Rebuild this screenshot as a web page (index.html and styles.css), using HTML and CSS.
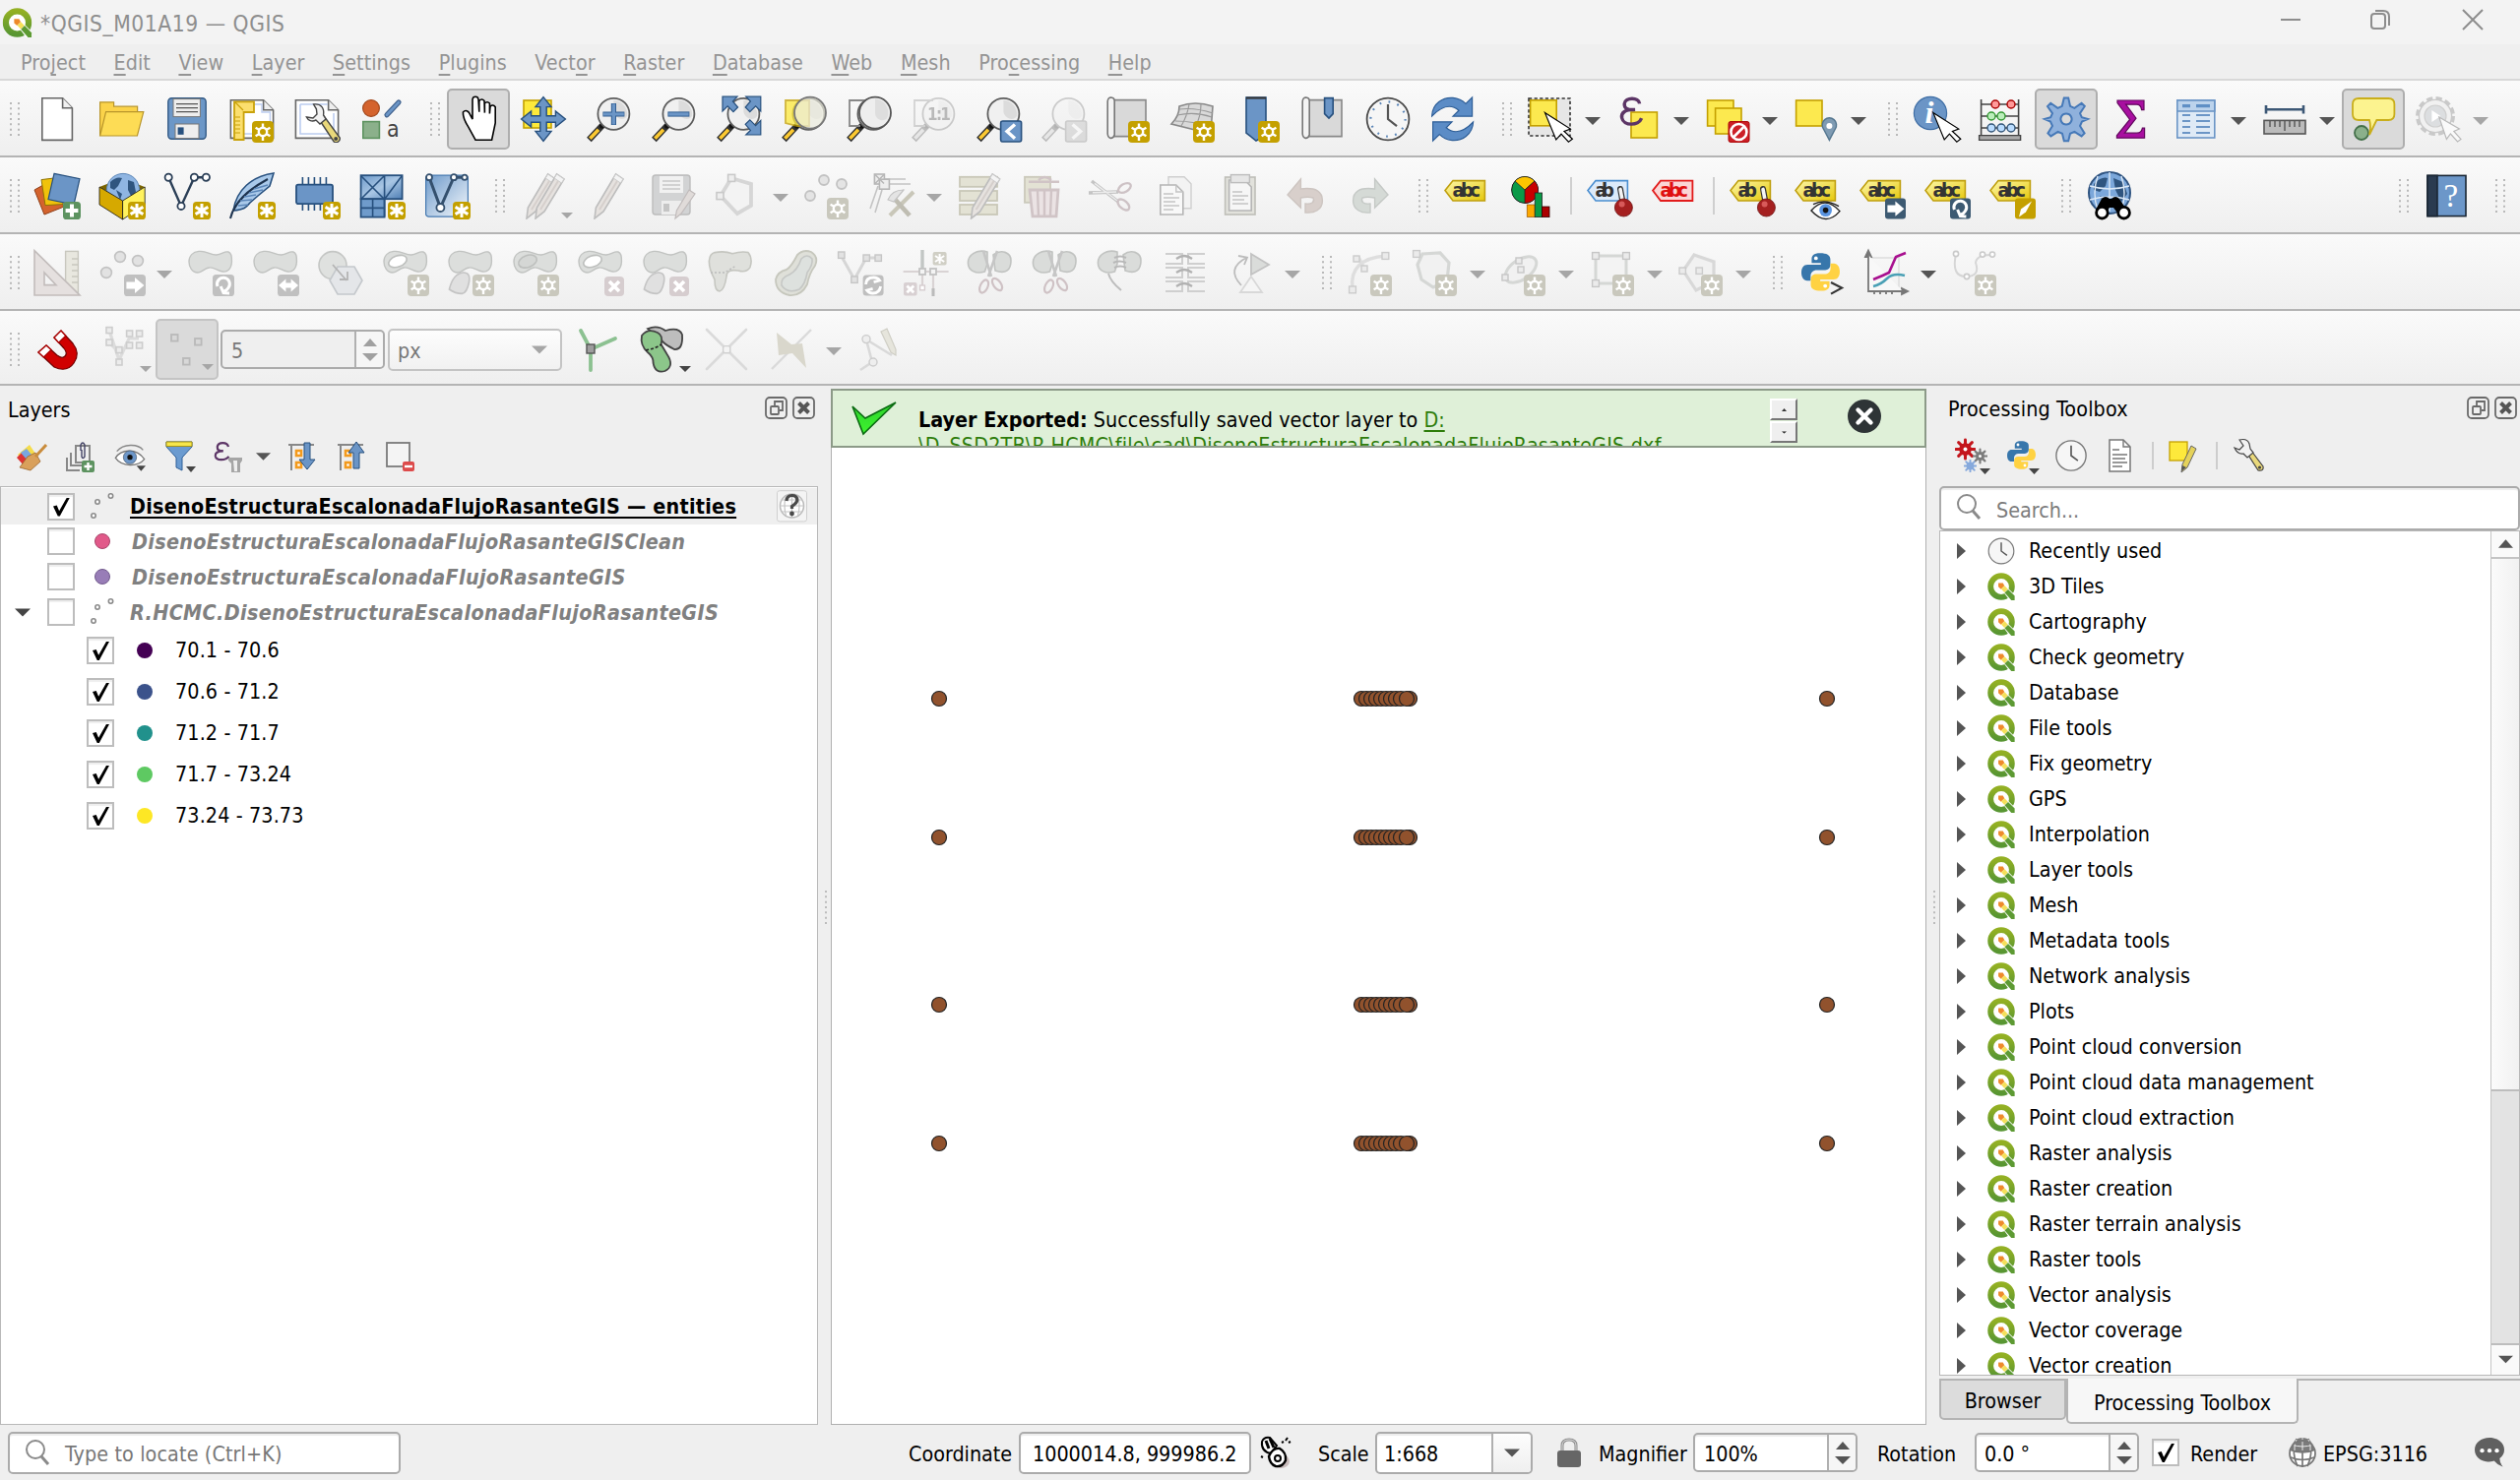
FILE: index.html
```html
<!DOCTYPE html>
<html lang="en">
<head>
<meta charset="utf-8">
<title>*QGIS_M01A19 — QGIS</title>
<link rel="stylesheet" href="styles.css">
</head>
<body>
<svg class="defs" width="0" height="0">
<defs>
<linearGradient id="gy" x1="0" y1="0" x2="1" y2="1"><stop offset="0" stop-color="#fdf7a8"/><stop offset="1" stop-color="#e6c80c"/></linearGradient>
<linearGradient id="gb" x1="0" y1="0" x2="1" y2="1"><stop offset="0" stop-color="#6f9bcb"/><stop offset=".5" stop-color="#a9c6e4"/><stop offset="1" stop-color="#4f7fb5"/></linearGradient>
<linearGradient id="gv" x1="0" y1="0" x2="1" y2="1"><stop offset="0" stop-color="#6f9bcb"/><stop offset="1" stop-color="#f4f8fc"/></linearGradient>
<linearGradient id="gq" x1="0" y1="0" x2="0" y2="1"><stop offset="0" stop-color="#93b023"/><stop offset="1" stop-color="#589632"/></linearGradient>
<linearGradient id="gk" x1="0" y1="0" x2="0" y2="1"><stop offset="0" stop-color="#2fd02f"/><stop offset="1" stop-color="#3df52d"/></linearGradient>
</defs>
<symbol id="handle" viewBox="0 0 10 34"><path d="M1 0v34M9 0v34" stroke="#b9b9b9" stroke-width="2" stroke-dasharray="2 3.33"/></symbol>
<symbol id="dn" viewBox="0 0 16 8"><path d="M0 0h16l-8 8z" fill="currentColor"/></symbol>
<symbol id="q" viewBox="0 0 24 24"><circle cx="12" cy="12" r="9.300" fill="#fff" stroke="url(#gq)" stroke-width="5"/><path d="M11.500 13.500l3-3.500L24.500 20v4.500h-5z" fill="#fff"/><path d="M9.500 9h4l1.300 2.300-3 3-2.300-2z" fill="#ee8a2b"/><path d="M12 14.200l3-2.800 2.800 3-3 2.800z" fill="#f5e05a"/><path d="M15 17.300l3-2.800 5.700 5.700V24h-2.900z" fill="#5d9a33"/></symbol>
<symbol id="star" viewBox="0 0 24 24"><rect x="12" y="13" width="11" height="11" rx="2" fill="#c4a000"/><circle cx="17.500" cy="18.500" r="2.100" fill="none" stroke="#fff" stroke-width="1.200"/><path d="M17.500 14.300v2.500M17.500 20.500v2.500M13.800 16.400l2.200 1.200M21.200 16.400l-2.200 1.200M13.800 20.600l2.200-1.200M21.200 20.600l-2.200-1.200" stroke="#fff" stroke-width="1.200"/></symbol>
<symbol id="star0" viewBox="0 0 24 24"><rect x="12" y="13" width="11" height="11" rx="2" fill="#c9c8bd"/><circle cx="17.500" cy="18.500" r="2.100" fill="none" stroke="#fff" stroke-width="1.200"/><path d="M17.500 14.300v2.500M17.500 20.500v2.500M13.800 16.400l2.200 1.200M21.200 16.400l-2.200 1.200M13.800 20.600l2.200-1.200M21.200 20.600l-2.200-1.200" stroke="#fff" stroke-width="1.200"/></symbol>
<symbol id="ast" viewBox="0 0 24 24"><rect x="15" y="15" width="9" height="9" rx="1.800" fill="#c4a000"/><path d="M19.500 16v7M16.300 17.700l6.400 3.600M22.700 17.700l-6.400 3.600" stroke="#fff" stroke-width="1.500"/></symbol>
<symbol id="cross0" viewBox="0 0 24 24"><rect x="14" y="14" width="10" height="10" rx="2" fill="#d6cdcf"/><path d="M16.500 16.500l5 5M21.500 16.500l-5 5" stroke="#fff" stroke-width="1.800"/></symbol>
<symbol id="blob0" viewBox="0 0 24 24"><path d="M6 1.200C10 .8 12 3.200 15 3 18 2.500 19 1 21 1.500 22.600 2 22.800 4 22.700 6.500c-.2 4-2.500 5.300-4.500 5-3-.3-4.500-2.500-7-2-2.500.3-3.500 2.500-5.700 2.500C2.500 12 1 9 1 6.500 1 3.500 3 1.500 6 1.200z" fill="#dcdedc" stroke="#c1c3c1" stroke-width=".7"/></symbol>
<symbol id="mag" viewBox="0 0 24 24"><path d="M9 15.200L2.200 22.500" stroke="#333" stroke-width="3.200"/><path d="M7 17.400l-4.300 4.500" stroke="#fcc931" stroke-width="1.800"/><circle cx="8.800" cy="15.500" r="1.300" fill="#111"/><circle cx="14.700" cy="9.400" r="8" fill="#f0f0f0" stroke="#5d5d5d" stroke-width=".9"/><path d="M14.700 2.500a7 7 0 0 1 6.800 8c-2 3-6 1-6.800-2z" fill="#dcdcdc"/></symbol>
<symbol id="page" viewBox="0 0 24 24"><path d="M1.200 2.400h16.600l5 5v14.300H1.200z" fill="#fff" stroke="#666" stroke-width=".8"/><path d="M17.800 2.400v5h5" fill="#eee" stroke="#666" stroke-width=".8"/></symbol>
<symbol id="tag" viewBox="0 0 24 24"><path d="M1 9.300L5 4.300h16.200v10.200H5z" fill="url(#gy)" stroke="#c0a010" stroke-width=".8"/></symbol>
<symbol id="arrowcur" viewBox="0 0 24 24"><path d="M9.200 8.700L22.200 17l-3.200 1.200 4.200 3.900-2 1.500-3.700-4-2.600 2.900z" fill="#fff" stroke="#000" stroke-width=".6"/></symbol>
<symbol id="gear" viewBox="0 0 24 24"><path d="M12 1v22M1 12h22M4.200 4.200l15.600 15.600M19.800 4.200L4.200 19.800" stroke="currentColor" stroke-width="3.400" stroke-linecap="round"/><circle cx="12" cy="12" r="7.200" fill="currentColor"/></symbol>
<symbol id="clock" viewBox="0 0 24 24"><ellipse cx="12" cy="12" rx="11" ry="11" fill="#f6f6f6" stroke="#777" stroke-width="1"/><path d="M12 4.500V12l5 3.700" fill="none" stroke="#555" stroke-width="1.200"/></symbol>
<symbol id="py" viewBox="0 0 24 24"><path d="M11.800 1c-4 0-5 1.500-5 3.500v2.200h5.400v1H4.400C2 7.700.8 9.700.8 12.300s1.200 4.700 3.400 4.700h2v-2.800c0-2 1.500-3.400 3.500-3.400h5c1.700 0 3-1.300 3-3V4.500C17.700 2.200 15.500 1 11.800 1z" fill="#3776ab"/><path d="M12.200 23c4 0 5-1.500 5-3.500v-2.200h-5.400v-1h7.800c2.400 0 3.600-2 3.600-4.600S22 7 19.800 7h-2v2.800c0 2-1.500 3.400-3.500 3.400h-5c-1.700 0-3 1.300-3 3v3.300C6.300 21.800 8.500 23 12.200 23z" fill="#ffd242"/><circle cx="9.300" cy="3.900" r="1.100" fill="#fff"/><circle cx="14.700" cy="20.100" r="1.100" fill="#fff"/></symbol>
<symbol id="wrench" viewBox="0 0 24 24"><path d="M13.300 12.500l2.300-2 8 11c.3 1.700-1.500 3-3 2z" fill="#e9d87a" stroke="#444" stroke-width=".7"/><path d="M10.300 4.500c4-.4 5.500 2 5 5.500l1.200 2-3 2.500-2-2c-2 1-4 .3-4.800-1.500l3.300.5 2-2-.3-2.600z" fill="#f2f2f2" stroke="#444" stroke-width=".7"/><circle cx="21.600" cy="22" r="1" fill="#444"/></symbol>
<symbol id="eye" viewBox="0 0 24 24"><path d="M1 13C5 6.500 17 5 23 14 18 20 6 20 1 13z" fill="#fff" stroke="#777" stroke-width="1"/><circle cx="12" cy="12.500" r="5" fill="#6d97c9" stroke="#456" stroke-width=".5"/><circle cx="12" cy="12.500" r="2" fill="#111"/><path d="M2 8C7 2 18 2 22 7" fill="none" stroke="#888" stroke-width="1"/></symbol>
<symbol id="up" viewBox="0 0 14 8"><path d="M0 8h14L7 0z" fill="currentColor"/></symbol>
<symbol id="scis" viewBox="0 0 24 24"><path d="M15.500 1L11 14M8.500 1l4 13" stroke="#c6c6c6" stroke-width="1.300"/><ellipse cx="8.800" cy="19" rx="1.900" ry="3.500" transform="rotate(25 8.800 19)" fill="none" stroke="#cfc2c5" stroke-width="1.100"/><ellipse cx="15.500" cy="18" rx="1.900" ry="3.500" transform="rotate(-35 15.500 18)" fill="none" stroke="#cfc2c5" stroke-width="1.100"/></symbol>
<symbol id="cut" viewBox="0 0 24 24"><path d="M10.500 1.500C5 0 .7 3 .7 7s4 6 8.500 4.500l1.300-4zM13.500 3c4-3 9-1.500 9 3s-2.500 7-8 5z" fill="#dadcda" stroke="#c1c3c1" stroke-width=".8"/></symbol>
<symbol id="pen0" viewBox="0 0 24 24"><path d="M15.800 1l3.700 2.500L9.500 20l-4.500 3.500.7-5.500z" fill="#e6e2df" stroke="#bdbdbd" stroke-width=".8"/><path d="M15.800 1l3.700 2.500-1.300 2-3.600-2.500z" fill="#f4f4f4" stroke="#ccc" stroke-width=".5"/><path d="M16.500 4.500L7.500 19" stroke="#d5cfcc" stroke-width="1"/></symbol>
<symbol id="pin" viewBox="0 0 24 24"><path d="M18.500 14l-1-5.500" stroke="#333" stroke-width="3" stroke-linecap="round"/><path d="M18.500 14l-1-5.300" stroke="#f4f4f4" stroke-width="1.800" stroke-linecap="round"/><circle cx="19.200" cy="18" r="4.500" fill="#a52020" stroke="#6d1010" stroke-width=".4"/><circle cx="18.300" cy="16.200" r="1.500" fill="#d85a5a"/></symbol>
<symbol id="globe" viewBox="0 0 32 32"><circle cx="16" cy="17" r="13.500" fill="#fff"/><path d="M4 15C5 6 10 2 16 2s11 4 12 13q-12 4-24 0z" fill="#7b7b7b" transform="translate(0 -1)"/><path d="M3 13q13 6 26 0M4 21q12 5 24 0M16 1v30M10 2q-6 14 1 28M22 2q6 14-1 28M5 8q11 4 22 0" fill="none" stroke="#777" stroke-width="1.700"/><path d="M5 8q11 4 22 0M16 1v13M10 3q-3 6-2 11M22 3q3 6 2 11" fill="none" stroke="#eee" stroke-width="1"/><circle cx="16" cy="17" r="13" fill="none" stroke="#777" stroke-width="1.800"/></symbol>
<symbol id="pts" viewBox="0 0 24 28"><g fill="#fff" stroke="#8a8a8a" stroke-width="1.600"><circle cx="20.500" cy="4" r="2.200"/><circle cx="7" cy="10" r="2.200"/><circle cx="3" cy="24" r="2.200"/></g></symbol>
</svg>

<header class="titlebar">
  <svg class="logo" viewBox="0 0 24 24"><use href="#q"/></svg>
  <span class="wtitle">*QGIS_M01A19 — QGIS</span>
  <svg class="winbtns" viewBox="0 0 210 24" fill="none" stroke="#8d8d8d" stroke-width="2"><path d="M1 11h20M186 1l20 20M206 1l-20 20"/><rect x="93" y="5" width="14" height="15" rx="3"/><path d="M97 2h8q6 0 6 6v9"/></svg>
</header>
<nav class="menubar">
<span>Pro<u>j</u>ect</span><span><u>E</u>dit</span><span><u>V</u>iew</span><span><u>L</u>ayer</span><span><u>S</u>ettings</span><span><u>P</u>lugins</span><span>Vect<u>o</u>r</span><span><u>R</u>aster</span><span><u>D</u>atabase</span><span><u>W</u>eb</span><span><u>M</u>esh</span><span>Pro<u>c</u>essing</span><span><u>H</u>elp</span>
</nav>

<div class="toolbar">
<svg class="handle"><use href="#handle"/></svg>
<i class="t"><svg viewBox="0 0 24 24"><path d="M4.400 1.400h10.400l4.900 5v16.300H4.400z" fill="#fff" stroke="#666" stroke-width=".8"/><path d="M14.800 1.400v5h4.900" fill="#f0f0f0" stroke="#666" stroke-width=".8"/></svg></i>
<i class="t"><svg viewBox="0 0 24 24"><path d="M.8 20.500V3.400h7v2.200h12v4" fill="#fbd34a" stroke="#b8952b" stroke-width=".6"/><path d="M.8 20.500L3.800 8.300h19.100l-3.200 12.200z" fill="#fddc55" stroke="#b8952b" stroke-width=".6"/></svg></i>
<i class="t"><svg viewBox="0 0 24 24"><rect x="2.400" y="1.400" width="19.200" height="20.700" rx="1.800" fill="#6c97c7" stroke="#335a85" stroke-width=".7"/><rect x="5" y="1.800" width="13.700" height="9" fill="#eee" stroke="#777" stroke-width=".5"/><path d="M6.500 4.300h11M6.500 6.300h11M6.500 8.300h11" stroke="#555" stroke-width=".7"/><rect x="6" y="14.500" width="12" height="7.300" fill="#eee" stroke="#777" stroke-width=".5"/><rect x="7.300" y="16.200" width="3" height="3.700" fill="#27507e"/></svg></i>
<i class="t"><svg viewBox="0 0 24 24"><use href="#page"/><path d="M13 4.500h4v4h4.200v11H8" fill="none" stroke="#bccdf0" stroke-width=".7"/><path d="M3 3.200h10v5.300H7.800v14H3z" fill="#fbdf6e" stroke="#c9a20a" stroke-width=".9"/><path d="M3.500 11h2.500M3.500 13h2.500M3.500 15h2.500M3.500 17h2.500M3.500 19h2.500M3.500 3.500l4 4" stroke="#c9a20a" stroke-width=".6"/><use href="#star"/></svg></i>
<i class="t"><svg viewBox="0 0 24 24"><use href="#page"/><path d="M3.500 4.500h14M3.500 4.500v15h17V9" fill="none" stroke="#bccdf0" stroke-width=".8"/><use href="#wrench"/></svg></i>
<i class="t"><svg viewBox="0 0 24 24"><circle cx="6.500" cy="6.500" r="4.200" fill="#d4632d" stroke="#a34a1f" stroke-width=".6"/><path d="M14.500 9.900l6-6.400" stroke="#3f608c" stroke-width="2.600" stroke-linecap="round"/><path d="M14.500 9.900l6-6.400" stroke="#6b95c6" stroke-width="1.400" stroke-linecap="round"/><rect x="2.400" y="13.300" width="8.300" height="8.400" fill="#8bb08b" stroke="#5d9360" stroke-width=".8"/><text x="14.500" y="20.800" font-size="11.500" fill="#444">a</text></svg></i>
<svg class="handle"><use href="#handle"/></svg>
<i class="t on"><svg viewBox="0 0 24 24"><path d="M10.500 22.600L7 16.200Q4 11.500 4.200 8.500 5.600 6.900 7.200 8.700L9 12V2Q9.200.6 10.500.6T12 2l.4 6.400V2.800q1.300-1.600 2.600 0l.2 6V4q1.300-1.300 2.500 0v5.200l.3-3.600q1.400-1.300 2.600.3V14l-1.800 8.600z" fill="#fff" stroke="#000" stroke-width=".8"/></svg></i>
<i class="t"><svg viewBox="0 0 24 24"><rect x="2" y="2.500" width="14" height="14" fill="#fde93b" stroke="#c4a000" stroke-width=".8"/><path d="M12 .8l4 5h-2.400v4.600h4.600V8l5 4-5 4v-2.400h-4.600v4.600H16l-4 5-4-5h2.400v-4.600H5.800V16l-5-4 5-4v2.400h4.600V5.800H8z" fill="#6b95c6" stroke="#27507e" stroke-width=".7"/></svg></i>
<i class="t"><svg viewBox="0 0 24 24"><use href="#mag"/><path d="M14.700 4v11M9.200 9.500h11" stroke="#335f92" stroke-width="2.600"/><path d="M14.700 4.300v10.400M9.500 9.500h10.400" stroke="#6b95c6" stroke-width="1.600"/></svg></i>
<i class="t"><svg viewBox="0 0 24 24"><use href="#mag"/><path d="M9.200 9.500h11" stroke="#335f92" stroke-width="2.600"/><path d="M9.600 9.500h10.200" stroke="#6b95c6" stroke-width="1.600"/></svg></i>
<i class="t"><svg viewBox="0 0 24 24"><use href="#mag"/><g fill="#6b95c6" stroke="#27507e" stroke-width=".6"><path d="M4 .6h7.500L9.200 3l2.600 3-2.300 2.300-2.900-2.900L4 8z"/><path d="M23.400.6h-7.500L18.200 3l-2.600 3 2.300 2.300 2.900-2.900L23.400 8z"/><path d="M23.400 20h-7.500l2.300-2.300-2.600-3 2.300-2.300 2.900 2.900 2.600-2.600z"/></g></svg></i>
<i class="t"><svg viewBox="0 0 24 24"><use href="#mag"/><path d="M3 2.500h12v13H9L3 14z" fill="#fde93b" opacity=".75" stroke="#c4a000" stroke-width=".9"/><circle cx="15.500" cy="8.800" r="8" fill="#ededde" fill-opacity=".7" stroke="#777" stroke-width=".9"/></svg></i>
<i class="t"><svg viewBox="0 0 24 24"><use href="#mag"/><path d="M8 15.500H2.500v-13H12" fill="none" stroke="#888" stroke-width=".9"/><circle cx="15.500" cy="8.800" r="8" fill="#eee" stroke="#555" stroke-width=".9"/><path d="M15.500 1.800a7 7 0 0 1 6 10c-3 2-6 0-6-3z" fill="#dedede"/></svg></i>
<i class="t off"><svg viewBox="0 0 24 24"><use href="#mag"/><path d="M8 15.500H2.500v-13H12" fill="none" stroke="#777" stroke-width=".9"/><text x="9" y="12.500" font-size="8.500" font-weight="bold" fill="#222" textLength="12">1:1</text></svg></i>
<i class="t"><svg viewBox="0 0 24 24"><use href="#mag"/><rect x="13.300" y="13" width="10.500" height="10.500" rx="1" fill="#6b95c6" stroke="#27507e" stroke-width=".8"/><path d="M20.500 14.700l-4 3.600 4 3.600" fill="none" stroke="#fff" stroke-width="1.700"/></svg></i>
<i class="t off"><svg viewBox="0 0 24 24"><use href="#mag"/><rect x="13.300" y="13" width="10.500" height="10.500" rx="1" fill="#8aa" stroke="#567" stroke-width=".8"/><path d="M16.800 14.700l4 3.600-4 3.600" fill="none" stroke="#fff" stroke-width="1.700"/></svg></i>
<i class="t"><svg viewBox="0 0 24 24"><path d="M4 2.300h17v18.500H3.500z" fill="#d9d9d9" stroke="#888" stroke-width=".8"/><path d="M1.600 19.500V3q.2-2 1.800-2 1.700.1 1.700 2v17q-.6 1.800-2 1.700-1.300-.2-1.500-2.200z" fill="#f3f3f3" stroke="#777" stroke-width=".8"/><use href="#star"/></svg></i>
<i class="t"><svg viewBox="0 0 24 24"><path d="M5 5.500q8-3 17 0l-1 13-8-1-12-3q4-4 4-9z" fill="#d9d9d9" stroke="#888" stroke-width=".8"/><path d="M4 10q9-2 17.500 1M10 4.500q-1 6-4 11M16 4.500q0 6-3 12M5 7q8-1 17 2M3 13q9 0 18 3" fill="none" stroke="#999" stroke-width=".6"/><use href="#star"/></svg></i>
<i class="t"><svg viewBox="0 0 24 24"><path d="M6 1h10v19.500L11 23l-5-4z" fill="#6b95c6" stroke="#27507e" stroke-width=".8"/><path d="M6 1.300h10" stroke="#333" stroke-width="1"/><use href="#star"/></svg></i>
<i class="t"><svg viewBox="0 0 24 24"><path d="M4 2.300h17.500v18.500H3.500z" fill="#d9d9d9" stroke="#888" stroke-width=".8"/><path d="M1.600 19.500V3q.2-2 1.800-2 1.700.1 1.700 2v17q-.6 1.800-2 1.700-1.300-.2-1.500-2.200z" fill="#f3f3f3" stroke="#777" stroke-width=".8"/><path d="M12.800 1.300h4.300v8L15 11.500l-2.200-2.200z" fill="#6b95c6" stroke="#27507e" stroke-width=".8"/></svg></i>
<i class="t"><svg viewBox="0 0 24 24"><circle cx="12" cy="12" r="10.700" fill="#f6f6f6" stroke="#4a4a4a" stroke-width=".9"/><path d="M12 4.500V12l4.500 3.600" fill="none" stroke="#555" stroke-width="1.100"/><circle cx="12" cy="12" r="8.800" fill="none" stroke="#5b86b8" stroke-width="1.100" stroke-dasharray=".9 3.708"/></svg></i>
<i class="t"><svg viewBox="0 0 24 24"><path d="M1.300 10.500C1.500 4 7 .8 12 1.200c3 .3 4.800 1.300 6.500 3L21.800 1v9.600H12l3-3c-4-3.500-9-2-13.700 2.900z" fill="#5b8cc6" stroke="#2f5f98" stroke-width=".6"/><path d="M22.300 13.500C22 20 16.500 23.200 11.600 22.800c-3-.3-4.800-1.300-6.400-3L1.800 23v-9.600h9.700l-2.900 3c4 3.500 9 2 13.700-2.900z" fill="#5b8cc6" stroke="#2f5f98" stroke-width=".6"/></svg></i>
<svg class="handle h33"><use href="#handle"/></svg>
<i class="t"><svg viewBox="0 0 24 24"><rect x="1" y="1.500" width="21" height="19" fill="#e6e6e6" stroke="#333" stroke-width=".8" stroke-dasharray="1.600 1.200"/><rect x="1.800" y="2.400" width="13.300" height="13" fill="#fce94f" stroke="#c4a000" stroke-width=".8"/><use href="#arrowcur"/></svg></i><svg class="dd"><use href="#dn"/></svg>
<i class="t"><svg viewBox="0 0 24 24"><rect x="8" y="8.500" width="13.200" height="13" fill="#fce94f" stroke="#c4a000" stroke-width=".8"/><path d="M12.300 4.200C12 .8 5 .8 4.600 4.200c-.2 2.300 1.700 3.400 5.400 3-5-.2-7.200 1.600-6.700 4.200.8 4.200 8.500 4.200 10 .2" fill="none" stroke="#5c3566" stroke-width="1.700"/></svg></i><svg class="dd"><use href="#dn"/></svg>
<i class="t"><svg viewBox="0 0 24 24"><rect x="1.800" y="2.500" width="13.200" height="13" fill="#fce94f" stroke="#c4a000" stroke-width=".8"/><rect x="5.800" y="6.500" width="13.200" height="13" fill="#fce94f" stroke="#c4a000" stroke-width=".8"/><rect x="12.500" y="13.300" width="10.500" height="10.400" rx="1" fill="#cc2027" stroke="#a00" stroke-width=".5"/><circle cx="17.700" cy="18.500" r="4" fill="none" stroke="#fff" stroke-width="1.300"/><path d="M15.200 21l5-5" stroke="#fff" stroke-width="1.300"/></svg></i><svg class="dd"><use href="#dn"/></svg>
<i class="t"><svg viewBox="0 0 24 24"><rect x="1.800" y="2.500" width="13.200" height="13" fill="#fce94f" stroke="#c4a000" stroke-width=".8"/><path d="M18.700 22.700L15.700 17a3.600 3.600 0 1 1 6 0z" fill="#7f9bb3" stroke="#54768f" stroke-width=".7"/><circle cx="18.700" cy="15.500" r="1.500" fill="#fff"/></svg></i><svg class="dd"><use href="#dn"/></svg>
<svg class="handle h32"><use href="#handle"/></svg>
<i class="t"><svg viewBox="0 0 24 24"><circle cx="9" cy="9" r="8.300" fill="#6b95c6" stroke="#3f6ea5" stroke-width=".6"/><text x="6.200" y="14.200" font-size="16" style="font-family:'Liberation Serif'" font-style="italic" font-weight="bold" fill="#fff">i</text><use href="#arrowcur" x="1.200"/></svg></i>
<i class="t"><svg viewBox="0 0 24 24"><path d="M1.800 2v18.500M20.800 2v18.500M1.800 4.500h19M1.800 10.500h19M1.800 16.500h19" stroke="#444" stroke-width=".8" fill="none"/><path d="M.8 20.300h21v2.400H.8z" fill="#aaa" stroke="#444" stroke-width=".7"/><g stroke-width=".7"><circle cx="9" cy="4.500" r="2" fill="#f99" stroke="#a00"/><circle cx="17" cy="4.500" r="2" fill="#f99" stroke="#a00"/><circle cx="7" cy="10.500" r="2" fill="#beb" stroke="#393"/><circle cx="12" cy="10.500" r="2" fill="#beb" stroke="#393"/><circle cx="7" cy="16.500" r="2" fill="#bdf" stroke="#357"/><circle cx="12" cy="16.500" r="2" fill="#bdf" stroke="#357"/><circle cx="17" cy="16.500" r="2" fill="#bdf" stroke="#357"/></g></svg></i>
<i class="t on"><svg viewBox="0 0 24 24"><path fill-rule="evenodd" d="M10.900 1.200h2.200l.9 4.200 2.200 1 3.600-2.500 1.600 1.600L19 9.100l.9 2L23 12l-3 1.300-1 2.200 2.300 3.700-1.500 1.500-3.600-2.300-2.200 1-.9 3.700h-2.200l-.9-3.700-2.200-1-3.600 2.300-1.500-1.500L5 15.500l-1-2.200L1 12l3.100-.9.9-2-2.500-3.600 1.600-1.600 3.600 2.500 2.200-1zM12 9.200a2.800 2.800 0 1 0 .01 0z" fill="#8fb1dc" stroke="#4679b8" stroke-width="1"/></svg></i>
<i class="t"><svg viewBox="0 0 24 24"><path d="M5 2.500h13.500v4.800h-1.200q-.4-2.700-2.600-2.700H9.300l5.200 7-5.800 7.500h6.200q2.300 0 2.800-2.500h1.100v5H4.700v-1.200l6.600-8.200L5 3.800z" fill="#a80fa0" stroke="#62095e" stroke-width=".6"/></svg></i>
<i class="t"><svg viewBox="0 0 24 24"><rect x="2.400" y="2.500" width="19" height="19" fill="#dfeaf6" stroke="#6b95c6" stroke-width=".8"/><rect x="2.400" y="2.500" width="19" height="5.500" fill="#bcd3ec" stroke="#6b95c6" stroke-width=".8"/><path d="M5 5.300h4M12 5.300h7" stroke="#5f8fc5" stroke-width="1.600"/><path d="M5 10h4M12 10h7M5 13h4M12 13h7M5 16h4M12 16h7M5 19h4M12 19h7" stroke="#6b95c6" stroke-width=".9"/></svg></i><svg class="dd"><use href="#dn"/></svg>
<i class="t"><svg viewBox="0 0 24 24"><path d="M2.500 5v4.200M21.500 5v4.200M2.500 7.100h19" stroke="#3d5876" stroke-width="1.300"/><rect x="1.500" y="12.700" width="21" height="6.800" fill="#bbb" stroke="#555" stroke-width=".8"/><path d="M4.500 13v3M7 13v3M9.500 13v3M12 13v5M14.500 13v3M17 13v3M19.500 13v3" stroke="#555" stroke-width=".7"/></svg></i><svg class="dd"><use href="#dn"/></svg>
<i class="t on"><svg viewBox="0 0 24 24"><circle cx="6" cy="19" r="3.500" fill="#8bb08b" stroke="#44704a" stroke-width=".9"/><path d="M4.500 1.500h15.200q3 0 3 3v5q0 3-3 3h-6L10 20q1-4 0-7.500H4.500q-3 0-3-3v-5q0-3 3-3z" fill="#fcf38f" stroke="#c9ae1b" stroke-width=".9"/></svg></i>
<i class="t"><svg viewBox="0 0 24 24"><circle cx="10.500" cy="10.500" r="8.800" fill="none" stroke="#c9c9c9" stroke-width="2.400" stroke-dasharray="3 1.608"/><circle cx="10.500" cy="10.500" r="8.300" fill="#f1f1f1" stroke="#c9c9c9" stroke-width=".7"/><circle cx="10.500" cy="10.500" r="5.500" fill="#dcdee0" stroke="#cfcfcf" stroke-width=".6"/><path d="M8.700 7.500v6l4.500-3z" fill="#fff"/><path d="M12.400 11L22.700 17l-2.800 1.200 3.600 4-1.700 1.300-3.600-4-2 2.700z" fill="#fafafa" stroke="#b9b9b9" stroke-width=".6"/></svg></i><svg class="dd dis"><use href="#dn"/></svg>
</div>

<div class="toolbar">
<svg class="handle"><use href="#handle"/></svg>
<i class="t"><svg viewBox="0 0 24 24"><path d="M.5 9l8-4.500 7 13-10 4z" fill="#d4632d" stroke="#8d3f19" stroke-width=".5"/><path d="M4 3.800l12-1.500-1 14-9 .5z" fill="#f0c20b" stroke="#8f7305" stroke-width=".5"/><path d="M10.500.7l13 2.600-3 13.200-13-2.700z" fill="#6b95c6" stroke="#27507e" stroke-width=".6"/><rect x="15" y="15" width="9" height="9" rx="1.800" fill="#5d9360"/><path d="M19.500 16.300v6.400M16.300 19.500h6.400" stroke="#fff" stroke-width="2"/></svg></i>
<i class="t"><svg viewBox="0 0 24 24"><path d="M.5 7.500L12 3l11.500 4.500L12 14z" fill="#7a6400"/><circle cx="12.500" cy="9" r="8.300" fill="#8fb5e2" stroke="#5b86b8" stroke-width=".5"/><path d="M6 5q3-3 6-2l-2 4-2 2-2-1zM15 4l3 1 1 5-2 3-2-4zM9 9l3 2-1 3z" fill="#2f557f"/><path d="M.5 7.500L12.300 14.500V24L.5 16.500z" fill="#d6a900" stroke="#111" stroke-width=".4"/><path d="M23.600 7.500L12.300 14.500V24l11.300-7.500z" fill="#fff25e" stroke="#111" stroke-width=".4"/><use href="#ast"/></svg></i>
<i class="t"><svg viewBox="0 0 24 24"><path d="M2.600 2.600L9 17.200 15.700 2.600h6" fill="none" stroke="#2b3f57" stroke-width="1.200"/><g fill="#fff" stroke="#2b3f57" stroke-width=".9"><circle cx="2.600" cy="2.600" r="1.800"/><circle cx="9" cy="17.200" r="1.800"/><circle cx="15.700" cy="2.600" r="1.800"/><circle cx="21.700" cy="2.600" r="1.800"/></g><use href="#ast"/></svg></i>
<i class="t"><svg viewBox="0 0 24 24"><path d="M23 .5C12 2 4 9 2.500 19.500 8 19 9 18 11 15.500L15 12l6-5z" fill="#a9c9ea" stroke="#27507e" stroke-width=".8"/><path d="M20 3.500C10 9 3 15 1 23.500" fill="none" stroke="#1e3450" stroke-width="1"/><path d="M8 12.500l6-1M6 14.500l6-.5M10.500 10.500l7-1.500M13 8.500l7-2M5 17l5-.5" stroke="#5b86b8" stroke-width=".7"/><use href="#ast"/></svg></i>
<i class="t"><svg viewBox="0 0 24 24"><path d="M4.700 2.500v17M7.700 2.500v17M10.700 2.500v17M13.700 2.500v17M16.700 2.500v17" stroke="#27507e" stroke-width=".8"/><rect x="1.500" y="6.300" width="18.500" height="9.800" rx="1" fill="#6b95c6" stroke="#27507e" stroke-width=".9"/><use href="#ast"/></svg></i>
<i class="t"><svg viewBox="0 0 24 24"><rect x="1.300" y="1.600" width="21" height="12" fill="url(#gb)" stroke="#27507e" stroke-width=".9"/><rect x="1.300" y="13.600" width="12" height="9.200" fill="#6f9bcb" stroke="#27507e" stroke-width=".9"/><path d="M13.300 1.600v21M7.300 13.600v9M1.300 18.200h12M1.500 2l11.500 11.500M13 2L1.500 13.500M22 2l-8.500 11.500" stroke="#27507e" stroke-width=".8"/><use href="#ast"/></svg></i>
<i class="t"><svg viewBox="0 0 24 24"><rect x="1.300" y="1.600" width="21.400" height="21" rx="1.500" fill="url(#gv)" stroke="#4478b0" stroke-width=".6"/><path d="M3 2.600L8.700 18l6.800-15.400H21" fill="none" stroke="#34506e" stroke-width="1.500"/><g fill="#fff" stroke="#34506e" stroke-width=".9"><circle cx="3" cy="2.600" r="1.500"/><circle cx="8.700" cy="18" r="2"/><circle cx="15.500" cy="2.600" r="1.500"/><circle cx="21" cy="2.600" r="1.300"/></g><use href="#ast"/></svg></i>
<svg class="handle"><use href="#handle"/></svg>
<i class="t"><svg viewBox="0 0 24 24"><g transform="translate(-1.500 0)"><use href="#pen0"/></g><g transform="translate(3 0)"><use href="#pen0"/></g></svg><svg class="sub dis"><use href="#dn"/></svg></i>
<i class="t"><svg viewBox="0 0 24 24"><use href="#pen0"/></svg></i>
<i class="t"><svg viewBox="0 0 24 24"><rect x="1.500" y="1.500" width="19" height="20" rx="1.500" fill="#d2d3d4" stroke="#bcbcbc" stroke-width=".7"/><rect x="5" y="2" width="12" height="8.500" fill="#f1f1f1"/><path d="M6.500 4.500h9M6.500 6.500h9M6.500 8.500h9" stroke="#c8c8c8" stroke-width=".7"/><rect x="6" y="14.500" width="10" height="7" fill="#ededed"/><rect x="7" y="16" width="3" height="4" fill="#c5c5c5"/><path d="M20 9l3 2-7 10-3 2.500.7-4z" fill="#e0dbd9" stroke="#c0bbbb" stroke-width=".6"/></svg></i>
<i class="t"><svg viewBox="0 0 24 24"><path d="M8.500 3l10 3v11l-7 4L3 12z" fill="#f3f3f3" stroke="#d6d6d6" stroke-width="1.900"/><g fill="#eee" stroke="#c9c9c9" stroke-width=".8"><rect x="6.800" y="1.200" width="3.500" height="3.500"/><rect x="1" y="10.300" width="3.500" height="3.500"/></g></svg></i><svg class="dd dis"><use href="#dn"/></svg>
<i class="t"><svg viewBox="0 0 24 24"><g fill="#e4e4e4" stroke="#c2c2c2" stroke-width=".9"><circle cx="10.500" cy="4" r="2.500"/><circle cx="19.500" cy="6" r="2.500"/><circle cx="3.500" cy="12" r="2.500"/></g><use href="#star0"/></svg></i>
<i class="t"><svg viewBox="0 0 24 24"><path d="M5 3.500h14M7 6h14.500M5 7L1 18.500M7 9L3.500 20.500" stroke="#c4c4c4" stroke-width=".8"/><g fill="#eee" stroke="#b6b6b6" stroke-width=".8"><rect x="3.200" y="1" width="5" height="5"/><rect x="5.700" y="3.600" width="5" height="5"/></g><path d="M3.500 1.300l4.500 4.500M8 1.300L3.500 5.800" stroke="#b6b6b6" stroke-width=".7"/><path d="M11 22l12-12" stroke="#c9c7b9" stroke-width="2"/><path d="M12 12l9 10" stroke="#bfbdb2" stroke-width="2.400"/><path d="M10 14q2-5 8-5l-5 6z" fill="#e4e4e4" stroke="#c3c3c3" stroke-width=".6"/></svg></i><svg class="dd dis"><use href="#dn"/></svg>
<i class="t"><svg viewBox="0 0 24 24"><g fill="#e3e2d4" stroke="#c9c8b8" stroke-width=".9"><rect x="1.500" y="2.400" width="19" height="5"/><rect x="1.500" y="9.500" width="19" height="5"/><rect x="1.500" y="16.500" width="19" height="5"/></g><use href="#pen0" x="2.300"/></svg></i>
<i class="t"><svg viewBox="0 0 24 24"><rect x="1.500" y="2.400" width="13" height="13" fill="#e3e2d4" stroke="#cbc9bb" stroke-width=".9"/><path d="M4 9h14.500l-1 13.400h-12z" fill="#ebe3e4" stroke="#d0c4c6" stroke-width="1.400"/><path d="M3.500 4.900h15.500M8 9l.5 13M11.500 9v13M15 9l-.5 13M8.500 4q3-3 6.500 0" stroke="#d0c4c6" stroke-width="1.200" fill="none"/></svg></i>
<i class="t"><svg viewBox="0 0 24 24"><path d="M2.500 4.500L16 15M1 10.500l15-.5" stroke="#c4c4c4" stroke-width="1.700"/><path d="M4 5.700L15.500 14.500M3 10.400l12-.4" stroke="#ececec" stroke-width=".7"/><ellipse cx="19.200" cy="8" rx="3.500" ry="2" transform="rotate(-30 19.200 8)" fill="none" stroke="#cdc2c5" stroke-width="1.200"/><ellipse cx="18.700" cy="16.500" rx="3.500" ry="2" transform="rotate(42 18.700 16.500)" fill="none" stroke="#cdc2c5" stroke-width="1.200"/></svg></i>
<i class="t"><svg viewBox="0 0 24 24"><path d="M8.500 2.400h8l3.500 3.500v12.500H8.500z" fill="#f3f3f3" stroke="#cfcfcf" stroke-width=".7"/><path d="M4.400 6.500h8l3.500 3.500v11.500H4.400z" fill="#f8f8f8" stroke="#b5b5b5" stroke-width=".8"/><path d="M12.400 6.500v3.500h3.500M6 11h5M6 13h8M6 15h6M6 17h8M6 19h5" fill="none" stroke="#c3c3c3" stroke-width=".7"/></svg></i>
<i class="t"><svg viewBox="0 0 24 24"><rect x="4.300" y="2.500" width="15.200" height="19" fill="#e2e2dc" stroke="#bfbfb8" stroke-width=".8"/><path d="M6.300 4h8l3.300 3.500v12H6.300z" fill="#f6f6f6" stroke="#b5b5b5" stroke-width=".8"/><path d="M8 10h5M8 12h8M8 14h6M8 16h8" stroke="#c3c3c3" stroke-width=".7"/><rect x="7.200" y="1.300" width="9.500" height="4" fill="#e6e6e6" stroke="#bdbdbd" stroke-width=".7"/></svg></i>
<i class="t"><svg viewBox="0 0 24 24"><path d="M3 11.500L9.700 3.500v5c8-1 11 1.500 11 6 0 4.500-4 6.500-8.700 6V16c3.500.3 5-1 4-3q-2.500-.8-6.300 0v5z" fill="#d8cfcb" stroke="#cdc5c1" stroke-width=".7"/></svg></i>
<i class="t"><svg viewBox="0 0 24 24"><path d="M21 11.500L14.300 3.500v5c-8-1-11 1.500-11 6 0 4.500 4 6.500 8.700 6V16c-3.500.3-5-1-4-3q2.500-.8 6.300 0v5z" fill="#d5dad6" stroke="#c5c9c6" stroke-width=".7"/></svg></i>
<svg class="handle"><use href="#handle"/></svg>
<i class="t"><svg viewBox="0 0 24 24"><use href="#tag"/><text class="abc" x="4.700" y="12.600" textLength="14.300">abc</text></svg></i>
<i class="t"><svg viewBox="0 0 24 24"><circle cx="8.500" cy="9" r="6.700" fill="#0a9a48" stroke="#222" stroke-width=".5"/><path d="M8.500 9L3.500 4.500a6.700 6.700 0 0 1 10 0z" fill="#fcc400" stroke="#222" stroke-width=".4"/><path d="M8.500 9l5-4.500a6.700 6.700 0 0 1-5 11.200z" fill="#c80000" stroke="#222" stroke-width=".4"/><rect x="9.600" y="16.500" width="4" height="6.300" fill="#fca800" stroke="#840" stroke-width=".3"/><rect x="13.600" y="10.500" width="3.700" height="12.300" fill="#0a9a48" stroke="#222" stroke-width=".4"/><rect x="17.300" y="17.500" width="3.700" height="5.300" fill="#a00" stroke="#300" stroke-width=".4"/></svg></i>
<b class="sep"></b>
<i class="t"><svg viewBox="0 0 24 24"><path d="M1 9.300L5 4.300h16.200v10.200H5z" fill="#dceafa" stroke="#4a8ed0" stroke-width=".8"/><text class="abc" x="4.700" y="12.600" textLength="9.700">ab</text><use href="#pin"/></svg></i>
<i class="t"><svg viewBox="0 0 24 24"><path d="M1 9.300L5 4.300h16.200v10.200H5z" fill="#fbd5d5" stroke="#e21c1c" stroke-width=".9"/><text class="abc red" x="4.700" y="12.600" textLength="14.300">abc</text></svg></i>
<b class="sep"></b>
<i class="t"><svg viewBox="0 0 24 24"><use href="#tag"/><text class="abc" x="4.700" y="12.600" textLength="9.700">ab</text><use href="#pin"/></svg></i>
<i class="t"><svg viewBox="0 0 24 24"><use href="#tag"/><text class="abc" x="4.700" y="12.600" textLength="14.300">abc</text><path d="M9 19.500q7-8 14.500.3-7 8-14.500-.3z" fill="#fff" stroke="#222" stroke-width=".7"/><circle cx="16.300" cy="19.300" r="3.200" fill="#5a94e0"/><circle cx="16.300" cy="19.300" r="1.400" fill="#111"/><path d="M10 16.300q6-3 13 1" fill="none" stroke="#222" stroke-width=".7"/></svg></i>
<i class="t"><svg viewBox="0 0 24 24"><use href="#tag"/><text class="abc" x="4.700" y="12.600" textLength="14.300">abc</text><rect x="13.500" y="13.300" width="10.500" height="10.500" rx="1.500" fill="#3d5a72"/><path d="M14.700 16.800h4v-2l4.500 3.800-4.500 3.800v-2h-4z" fill="#fff"/></svg></i>
<i class="t"><svg viewBox="0 0 24 24"><use href="#tag"/><text class="abc" x="4.700" y="12.600" textLength="14.300">abc</text><rect x="13.500" y="13.300" width="10.500" height="10.500" rx="1.500" fill="#3d5a72"/><path d="M15.700 19a3.200 3.200 0 1 1 5.600.6q-.8 1.400-2.300 1.900M17.300 19l1.400 3.300 3 .2" fill="none" stroke="#fff" stroke-width="1.500"/></svg></i>
<i class="t"><svg viewBox="0 0 24 24"><use href="#tag"/><text class="abc" x="4.700" y="12.600" textLength="14.300">abc</text><rect x="13.500" y="13.300" width="10.500" height="10.500" rx="1.500" fill="#c4a000"/><path d="M22 14.700l-5.500 4-1 4 3.500-2.500z" fill="#fff"/></svg></i>
<svg class="handle h33"><use href="#handle"/></svg>
<i class="t"><svg viewBox="0 0 24 24"><circle cx="12" cy="10.500" r="10.500" fill="#7ba7da" stroke="#2e5380" stroke-width="1"/><path d="M4 6q4-4 7-3l-1 4-3 3-3-1zM14 3l5 2 2 6-3 4-3-6zM7 12l4 2-1 4z" fill="#2f557f"/><path d="M2 7q10 3 20 0M2 14q10-3 20 0M12 0v20M6 2q-3 9 0 17M18 2q3 9 0 17" fill="none" stroke="#dce9f7" stroke-width=".7"/><path d="M5 19l3-5.500q2-2 4 0h1q2-2 4 0l4 6-4 2.500-3-4h-2l-3 4z" fill="#000"/><circle cx="8.200" cy="20.600" r="2.900" fill="#fff" stroke="#000" stroke-width="1.400"/><circle cx="19.300" cy="20.600" r="2.900" fill="#fff" stroke="#000" stroke-width="1.400"/></svg></i>
<svg class="handle far"><use href="#handle"/></svg>
<i class="t"><svg viewBox="0 0 24 24"><rect x="2" y="1.700" width="19.500" height="20.600" fill="#6c97c9" stroke="#1a2633" stroke-width=".8"/><rect x="2" y="1.700" width="5" height="20.600" fill="#2a3b50" stroke="#1a2633" stroke-width=".8"/><text x="10.300" y="17.500" font-size="16.500" style="font-family:'Liberation Serif'" fill="#fff">?</text></svg></i>
<svg class="handle"><use href="#handle"/></svg>
</div>

<div class="toolbar">
<svg class="handle"><use href="#handle"/></svg>
<i class="t"><svg viewBox="0 0 24 24"><rect x="16.300" y="1.200" width="6.400" height="22" fill="#e8e7df" stroke="#c8c7be" stroke-width=".7"/><path d="M19.500 5h3M19.500 8h3M19.500 11h3M19.500 14h3M19.500 17h3" stroke="#c8c7be" stroke-width=".7"/><path fill-rule="evenodd" d="M.5.8v22.700h23zM5.500 12v6.300h6z" fill="#e5e0df" stroke="#c2bcbb" stroke-width=".8"/></svg></i>
<i class="t"><svg viewBox="0 0 24 24"><g fill="#e2e2e2" stroke="#c2c2c2" stroke-width=".8"><circle cx="11" cy="4" r="2.700"/><circle cx="20" cy="6" r="2.700"/><circle cx="4" cy="12" r="2.700"/></g><rect x="13" y="13" width="11" height="11" rx="1.800" fill="#c0c0c0"/><path d="M14.200 16.700h4.300v-2.200l4.700 4-4.700 4v-2.200h-4.300z" fill="#fff"/></svg></i><svg class="dd dis"><use href="#dn"/></svg>
<i class="t"><svg viewBox="0 0 24 24"><use href="#blob0"/><rect x="13" y="13" width="11" height="11" rx="1.800" fill="#c0c0c0"/><path d="M15.500 19a3.200 3.200 0 1 1 5.600.6q-.8 1.400-2.300 1.900M17.100 19l1.400 3.300 3 .2" fill="none" stroke="#fff" stroke-width="1.500"/></svg></i>
<i class="t"><svg viewBox="0 0 24 24"><use href="#blob0"/><rect x="13" y="13" width="11" height="11" rx="1.800" fill="#c0c0c0"/><path d="M13.500 18.500l3.700-3.300v2h2.600v-2l3.700 3.300-3.700 3.300v-2h-2.600v2z" fill="#fff"/></svg></i>
<i class="t"><svg viewBox="0 0 24 24"><circle cx="8" cy="8.300" r="7" fill="#dfe1df" stroke="#c4c6c4" stroke-width=".8"/><path d="M10.500 9h8.500l4 7-4 7h-8.500l-4-7z" fill="#e4e6e9" stroke="#c4c8cc" stroke-width=".8"/><path d="M8 8l7 8M11.500 15.500h4v-4" fill="none" stroke="#b4b4b4" stroke-width=".9"/></svg></i>
<i class="t"><svg viewBox="0 0 24 24"><use href="#blob0"/><ellipse cx="8" cy="6.300" rx="4.800" ry="2.800" transform="rotate(-20 8 6.300)" fill="#fff" stroke="#bdbfbd" stroke-width=".8"/><use href="#star0" x="1"/></svg></i>
<i class="t"><svg viewBox="0 0 24 24"><use href="#blob0"/><path d="M1.200 20.500q2-8 7-8.500 4-.2 3 5t-3.500 5.700q-3.500 0-6.500-2.200z" fill="#e0e0e0" stroke="#c4c4c4" stroke-width=".8"/><use href="#star0" x="1"/></svg></i>
<i class="t"><svg viewBox="0 0 24 24"><use href="#blob0"/><ellipse cx="8" cy="6.300" rx="4.800" ry="3" transform="rotate(-20 8 6.300)" fill="#d5d7d5" stroke="#bdbfbd" stroke-width=".8"/><use href="#star0" x="1"/></svg></i>
<i class="t"><svg viewBox="0 0 24 24"><use href="#blob0"/><ellipse cx="8" cy="6.300" rx="4.800" ry="2.800" transform="rotate(-20 8 6.300)" fill="#fff" stroke="#bdbfbd" stroke-width=".8"/><use href="#cross0"/></svg></i>
<i class="t"><svg viewBox="0 0 24 24"><use href="#blob0"/><path d="M1.200 20.500q2-8 7-8.500 4-.2 3 5t-3.500 5.700q-3.500 0-6.500-2.200z" fill="#e0e0e0" stroke="#c4c4c4" stroke-width=".8"/><use href="#cross0"/></svg></i>
<i class="t"><svg viewBox="0 0 24 24"><path d="M4 1.800q5-1 9 .6 5-1.500 8-.6 2.500 3 1 7.500-2 3-6 1.700-6-1-6 3-1 7-3.500 7.500-2.500 0-2.500-6Q1 10 1.200 6 1.500 2.500 4 1.800z" fill="#dfe0dc" stroke="#c5c6c0" stroke-width=".8"/><path d="M2 12h7l6-3.500" fill="none" stroke="#bbb" stroke-width=".7" stroke-dasharray="1 1"/></svg></i>
<i class="t"><svg viewBox="0 0 24 24"><path d="M13 3q3-3 7-1.500 4 2.500 2 7-3 4-4 9.500-3 6-9 5.500-7-1.500-7-8 1-4 5.500-5Q10 9 13 3z" fill="#dfe0d9" stroke="#c6c7bd" stroke-width=".9"/><path d="M15 5q3-3 5.500 0 .5 3-2.500 7-1 6-4 8.500-6 2.500-9-2-.5-4 4-5.500 4-2 6-8z" fill="#dde1de" stroke="#c5c7c5" stroke-width=".8"/></svg></i>
<i class="t"><svg viewBox="0 0 24 24"><path d="M2 3l7 12.500L15 4.500h6" fill="none" stroke="#d6d6d6" stroke-width="1.500"/><g fill="#e2e2e2" stroke="#c6c6c6" stroke-width=".7"><rect x=".8" y="1.500" width="3.200" height="3.200"/><rect x="7.400" y="14" width="3.200" height="3.200"/><rect x="13.500" y="3" width="3.200" height="3.200"/><rect x="19.500" y="3" width="3.200" height="3.200"/></g><rect x="13.300" y="13.300" width="10.500" height="10.500" rx="1.800" fill="#bfbfbf"/><path d="M14.800 18q0-3.500 4-3.500 2 0 3 1.500l-3 .8M22.300 19q-.5 3.500-4 3.500-2 0-3-1.500l3-.8" fill="none" stroke="#fff" stroke-width="1.400"/></svg></i>
<i class="t"><svg viewBox="0 0 24 24"><path d="M10.500.5v10" stroke="#c2c6c4" stroke-width="1.700"/><path d="M.8 11.500h23M10.500 13v7M16 13v10" stroke="#d9d3d4" stroke-width="1.100"/><path d="M16 20v4" stroke="#bbb" stroke-width="1.500"/><g fill="#f4f4f4" stroke="#c2c2c2" stroke-width=".9"><rect x="9" y="10" width="3" height="3"/><rect x="14.500" y="10" width="3" height="3"/></g><rect x="9.300" y="18.500" width="2.400" height="2.400" fill="#fff" stroke="#d6cdcf" stroke-width=".7"/><rect x="15.800" y="1.500" width="7" height="6.800" rx="1" fill="#d0cfc5"/><path d="M19.300 2.500v5M17 3.500l4.600 3M21.600 3.500L17 6.500" stroke="#fff" stroke-width="1"/><rect x="1" y="17" width="6.800" height="6.800" rx="1" fill="#d8d0d2"/><path d="M2.700 18.700l3.400 3.400M6.100 18.700l-3.400 3.400" stroke="#fff" stroke-width="1.400"/></svg></i>
<i class="t"><svg viewBox="0 0 24 24"><use href="#cut"/><use href="#scis"/></svg></i>
<i class="t"><svg viewBox="0 0 24 24"><use href="#cut"/><use href="#scis"/></svg></i>
<i class="t"><svg viewBox="0 0 24 24"><use href="#cut"/><path d="M9 4.500q3-1.500 6 0M8.500 7q3-1.500 6.500 0M9 9.500q3-1.500 6 0" fill="none" stroke="#b8b8b8" stroke-width="1"/><path d="M6 12.500q1 4 6.500 8.500" fill="none" stroke="#bdbdbd" stroke-width="1"/></svg></i>
<i class="t"><svg viewBox="0 0 24 24"><path d="M2 2.500h8.500v5H2M22 2.500h-8.500v5H22M2 9.500h8.500v5H2M22 9.500h-8.500v5H22M2 16.500h8.500v5H2M22 16.500h-8.500v5H22" fill="none" stroke="#cfcfcf" stroke-width="1"/><path d="M7.500 5q4-3 8 0M7.500 12q4-3 8 0M7.500 19q4-3 8 0" fill="none" stroke="#b2b2b2" stroke-width="1.100"/></svg></i>
<i class="t"><svg viewBox="0 0 24 24"><path d="M12.500 2.500v10.500l9-5z" fill="#dadcda" stroke="#c2c2c2" stroke-width=".9"/><path d="M12.500 14l-5.500 8h11z" fill="#f5f5f5" stroke="#d8d8d8" stroke-width=".9"/><path d="M7.500 18.500Q-.5 10 10 4.500M6 3.500l4.500.8L9 8" fill="none" stroke="#bcbcbc" stroke-width=".9"/></svg></i><svg class="dd dis"><use href="#dn"/></svg>
<svg class="handle"><use href="#handle"/></svg>
<i class="t"><svg viewBox="0 0 24 24"><path d="M3 20Q1 5 20 3.500M9 10L6 4" fill="none" stroke="#dedede" stroke-width="1.700"/><g fill="#ebebeb" stroke="#cbcbcb" stroke-width=".7"><rect x="1.300" y="19" width="3.400" height="3.400"/><rect x="18" y="1.800" width="3.400" height="3.400"/><rect x="3.500" y="3.500" width="3" height="3"/><rect x="7.500" y="8.500" width="3" height="3"/></g><use href="#star0"/></svg></i>
<i class="t"><svg viewBox="0 0 24 24"><path d="M5.500 2.500l9-.5 4.500 5-1 9-7 3.500-6-4L3 8z" fill="#f1f1f1" stroke="#d5d7d5" stroke-width="1.600"/><rect x=".8" y=".8" width="3.400" height="3.400" fill="#ebebeb" stroke="#cbcbcb" stroke-width=".7"/><use href="#star0"/></svg></i><svg class="dd dis"><use href="#dn"/></svg>
<i class="t"><svg viewBox="0 0 24 24"><ellipse cx="10.500" cy="10.500" rx="9" ry="5" transform="rotate(-35 10.500 10.500)" fill="#f1f1f1" stroke="#d5d7d5" stroke-width="1.500"/><g fill="#ebebeb" stroke="#c6c6c6" stroke-width=".7"><rect x="8" y="4.500" width="3" height="3"/><rect x="9" y="9" width="3" height="3"/><rect x="1" y="13" width="3" height="3"/></g><use href="#star0"/></svg></i><svg class="dd dis"><use href="#dn"/></svg>
<i class="t"><svg viewBox="0 0 24 24"><rect x="3.500" y="3.500" width="15.500" height="14" fill="#f3f3f3" stroke="#d5d7d5" stroke-width="1.500"/><g fill="#ebebeb" stroke="#c6c6c6" stroke-width=".7"><rect x="1.800" y="1.800" width="3.400" height="3.400"/><rect x="17.300" y="1.800" width="3.400" height="3.400"/><rect x="1.800" y="15.800" width="3.400" height="3.400"/></g><use href="#star0"/></svg></i><svg class="dd dis"><use href="#dn"/></svg>
<i class="t"><svg viewBox="0 0 24 24"><path d="M8.500 3l10 3.500v10l-9 4.500L3 11z" fill="#f1f1f1" stroke="#d8d8d8" stroke-width="1.600"/><g fill="#ebebeb" stroke="#cbcbcb" stroke-width=".7"><rect x="1" y="9.500" width="3.200" height="3.200"/><rect x="9.500" y="9.500" width="3.200" height="3.200"/></g><use href="#star0"/></svg></i><svg class="dd dis"><use href="#dn"/></svg>
<svg class="handle"><use href="#handle"/></svg>
<i class="t"><svg viewBox="0 0 24 24"><g transform="translate(1.300 1.300) scale(.87)"><use href="#py" width="24" height="24"/></g><path d="M17 17l5.500 2.800L17 22.800" fill="none" stroke="#333" stroke-width="1.100"/></svg></i>
<i class="t"><svg viewBox="0 0 24 24"><path d="M4.500 4.500h14v15" fill="none" stroke="#e3e3e3" stroke-width="1"/><path d="M1.500 4L3 .8 4.500 4zM20 20l3 1.500L20 23z" fill="#777" stroke="#777" stroke-width=".9"/><path d="M3 3v18h17z" fill="#f8f8f8"/><path d="M3 2v19.500h18M6 21v2M9 21v2M12 21v2M15 21v2" fill="none" stroke="#777" stroke-width=".9"/><path d="M5.500 15.500q5-2 8-3.500l3.500-8 5-2" fill="none" stroke="#a8108f" stroke-width="1.300"/><path d="M5.500 19q4-1 7-4 3-3 9-1.500" fill="none" stroke="#4aa0b5" stroke-width="1.300"/></svg></i><svg class="dd"><use href="#dn"/></svg>
<i class="t"><svg viewBox="0 0 24 24"><path d="M2.500 2.500Q0 14 7.500 14t5-7Q13 3 20 3" fill="none" stroke="#d6d6d6" stroke-width="1"/><g fill="#fff" stroke="#cacaca" stroke-width=".8"><circle cx="2.500" cy="2.500" r="1.300"/><circle cx="8" cy="14" r="1.300"/><circle cx="16" cy="2.800" r="1.300"/><circle cx="21" cy="2.800" r="1.300"/></g><use href="#star0"/></svg></i>
</div>

<div class="toolbar last">
<svg class="handle"><use href="#handle"/></svg>
<i class="t"><svg viewBox="0 0 24 24"><path d="M2.500 13.500L6.500 10l5.500 5q2.500 2 4 .5t-.5-4l-5-5.500 3.500-3.500 6 6.500q4 5 .5 10t-10 2z" fill="#d00000" stroke="#6e0000" stroke-width=".6"/><path d="M2.500 13.500L6.500 10l2.500 2.300-3.800 3.700zM10.500 6L14 2.500l2.400 2.600-3.600 3.500z" fill="#fff" stroke="#a00" stroke-width=".7"/></svg></i>
<i class="t"><svg viewBox="0 0 24 24"><path d="M5.500 2.500l5 15 5-11h5M5.500 8.500l4 4" fill="none" stroke="#dcdcdc" stroke-width="1.600"/><g fill="#ececec" stroke="#cdcdcd" stroke-width=".8"><rect x="4" y=".8" width="3" height="3"/><rect x="4" y="7" width="3" height="3"/><rect x="9" y="10.800" width="3" height="3"/><rect x="9" y="17" width="3" height="3"/><rect x="14.300" y="2.500" width="3" height="3"/><rect x="19.300" y="2.500" width="3" height="3"/><rect x="14.300" y="8.500" width="3" height="3"/><rect x="19.300" y="8.500" width="3" height="3"/></g></svg><svg class="sub dis"><use href="#dn"/></svg></i>
<i class="t on soft"><svg viewBox="0 0 24 24"><g fill="#d8d8d8" stroke="#b9b9b9" stroke-width=".9"><rect x="4" y="4.500" width="3.300" height="3.300"/><rect x="16" y="6.500" width="3.300" height="3.300"/><rect x="10" y="16.500" width="3.300" height="3.300"/></g></svg><svg class="sub dis"><use href="#dn"/></svg></i>
<span class="field tol"><span class="val">5</span><span class="spin dis"><svg><use href="#up"/></svg><svg><use href="#dn"/></svg></span></span>
<span class="field unit"><span class="val">px</span><svg class="ddi dis"><use href="#dn"/></svg></span>
<i class="t first4"><svg viewBox="0 0 24 24"><path d="M4 2.500L9 12v10.500M9 12l12.500-5.500" fill="none" stroke="#8cc191" stroke-width="1.900" stroke-linecap="round"/><rect x="7" y="9.500" width="4" height="4.500" fill="#9d9d9d" stroke="#555" stroke-width=".7"/></svg></i>
<i class="t"><svg viewBox="0 0 24 24"><path d="M5 1.500q5-2 9 1 7-2 8.500 2 .5 8-4 7.500-4-2-6-4z" fill="#bdbdbd" stroke="#444" stroke-width=".9"/><path d="M2 5q3-4 8-1.500 3 1.500 1.800 6l3 5q4 6-1 8.500-5 1.500-6-4Q8 16 5 13.500 1 10 2 5z" fill="#8cc68a" stroke="#444" stroke-width=".9"/><path d="M4 12.500q5-1 8-3" fill="none" stroke="#222" stroke-width=".8" stroke-dasharray="1.500 1"/></svg><svg class="sub"><use href="#dn"/></svg></i>
<i class="t"><svg viewBox="0 0 24 24"><path d="M2 2l20 20M22 2L2 22" stroke="#dadada" stroke-width="1.300" stroke-linecap="round"/><rect x="10.300" y="10.300" width="3.600" height="3.600" rx="1" fill="#f4f4f4" stroke="#d0d0d0" stroke-width=".7"/></svg></i>
<i class="t"><svg viewBox="0 0 24 24"><path d="M22 2L2 22" stroke="#dadada" stroke-width="1.200"/><path d="M4.500 3.500l7.500 6 5.500-.5 2 12.500-7-7.500-7 1z" fill="#d9d7cc"/></svg></i><svg class="dd dis"><use href="#dn"/></svg>
<i class="t"><svg viewBox="0 0 24 24"><path d="M2 22.500l6-4L5 7l13 8" fill="none" stroke="#d9d9d9" stroke-width="1.300"/><circle cx="5" cy="6.800" r="2" fill="#eee" stroke="#ccc" stroke-width=".7"/><circle cx="8.500" cy="18.500" r="2" fill="#eee" stroke="#ccc" stroke-width=".7"/><path d="M12.500 3l3-1.500 4.500 10.500v3l-2.500-1.500z" fill="#e6e5dc" stroke="#cfcec5" stroke-width=".6"/></svg></i>
</div>

<main class="work">
<section class="dock layers">
  <div class="dockhead"><span>Layers</span><svg class="dockbtns" viewBox="0 0 52 24"><g fill="none" stroke="#6a6a6a" stroke-width="1.800"><rect x="1" y="1" width="21" height="21" rx="4"/><rect x="29" y="1" width="21" height="21" rx="4"/><rect x="6" y="10" width="8" height="8" rx="1"/><path d="M10 9V5h8v9h-3"/></g><path d="M34.500 6.500l10 10M44.500 6.500l-10 10" stroke="#555" stroke-width="4"/></svg></div>
  <div class="docktools ltools">
    <svg viewBox="0 0 32 32"><path d="M2 14l12-10 8 12-10 10z" fill="#f5dc4a"/><path d="M1 17l6-6 5 8-4 6z" fill="#d33"/><path d="M5 12l6-4 5 6-5 5z" fill="#79a7df"/><path d="M12 16l8-4 5 9-10 9-11-3z" fill="#d9a05b" stroke="#9a642a" stroke-width=".8"/><path d="M20 16L31 4" stroke="#c98c3c" stroke-width="3"/></svg>
    <svg viewBox="0 0 32 32"><path d="M2 17v13h13M6 12v13h17M11 5h14v17H11z" fill="none" stroke="#888" stroke-width="2"/><path d="M16 10V4q2-4 4 0v12q-2 3-3 0V9" fill="none" stroke="#446" stroke-width="1.400"/><rect x="17" y="20" width="13" height="12" rx="2" fill="#5d9360"/><path d="M23.500 22v8M19.500 26h8" stroke="#fff" stroke-width="2.400"/></svg>
    <svg viewBox="0 0 24 24"><use href="#eye"/><path d="M17 19h7l-3.500 4z" fill="#444"/></svg>
    <svg viewBox="0 0 32 32"><path d="M3 1h26v5L19 17v13l-6-3V17L3 6z" fill="#6b9bd0" stroke="#2f5f98" stroke-width="1"/><path d="M3 1h26v4.500H3z" fill="#f6e64a" stroke="#a89414" stroke-width="1"/><path d="M23 26h10l-5 6z" fill="#444"/></svg>
    <svg viewBox="0 0 32 32"><path d="M16 6C15 .8 5.500.8 4.800 6c-.3 3 1.800 4.500 6 4.400-6 0-8.300 2-8 5 .8 5 10 5 13.700.5" fill="none" stroke="#5c3566" stroke-width="2.200"/><path d="M16 17h14v3l-2 3v9h-9v-9l-3-3z" fill="#a5a5a5"/><path d="M21 20h4v11h-3z" fill="#eee"/></svg>
    <svg class="dd8"><use href="#dn"/></svg>
    <svg viewBox="0 0 32 32"><path d="M2 4h26M5 4v26" stroke="#888" stroke-width="2"/><g fill="#fff" stroke="#f39a1c" stroke-width="2.600"><rect x="10" y="10" width="5" height="5"/><rect x="10" y="22" width="5" height="5"/></g><path d="M18 2h6v17h5l-8 10-8-10h5z" fill="#6b95c6" stroke="#27507e" stroke-width="1"/></svg>
    <svg viewBox="0 0 32 32"><path d="M2 4h26M5 4v26" stroke="#888" stroke-width="2"/><g fill="#fff" stroke="#f39a1c" stroke-width="2.600"><rect x="10" y="10" width="5" height="5"/><rect x="10" y="22" width="5" height="5"/></g><path d="M18 28h6V12h5L21 1l-8 11h5z" fill="#6b95c6" stroke="#27507e" stroke-width="1"/></svg>
    <svg viewBox="0 0 32 32"><rect x="2" y="2" width="23" height="24" fill="#f4f4f4" stroke="#7a7a7a" stroke-width="1.800"/><rect x="18" y="21" width="12" height="10" rx="2" fill="#dd4b4b"/><path d="M20 26h8" stroke="#fff" stroke-width="2.400"/></svg>
  </div>
  <div class="tree ltree">
    <div class="lr cur"><b class="cb ck"></b><svg class="pi"><use href="#pts"/></svg><span class="nm n1">DisenoEstructuraEscalonadaFlujoRasanteGIS — entities</span><svg class="crs" viewBox="0 0 32 50"><rect x="1" y="1" width="30" height="46" rx="3" fill="#f4f4f4" stroke="#c9c9c9" transform="translate(0 9) scale(1 .68)"/><circle cx="16" cy="25" r="12" fill="#fff" stroke="#bbb" stroke-width="1.500"/><path d="M4 25h24M16 13v24M6 19h20M6 31h20M10 15q-3 10 0 20M22 15q3 10 0 20" fill="none" stroke="#c4c4c4" stroke-width="1.200"/><path d="M10.500 20q.5-5.500 5.500-5.500t5.300 4.500q0 3-5.300 6.500v2.500" fill="none" stroke="#4a4a4a" stroke-width="3.200"/><circle cx="16" cy="33" r="2.400" fill="#4a4a4a"/></svg></div>
    <div class="lr"><b class="cb"></b><svg class="dot" viewBox="0 0 18 18"><circle cx="9" cy="9" r="7.500" fill="#e15989" stroke="#a8446a"/></svg><span class="nm it n2">DisenoEstructuraEscalonadaFlujoRasanteGISClean</span></div>
    <div class="lr"><b class="cb"></b><svg class="dot" viewBox="0 0 18 18"><circle cx="9" cy="9" r="7.500" fill="#987db7" stroke="#715a8c"/></svg><span class="nm it n3">DisenoEstructuraEscalonadaFlujoRasanteGIS</span></div>
    <div class="lr open"><svg class="tw"><use href="#dn"/></svg><b class="cb"></b><svg class="pi"><use href="#pts"/></svg><span class="nm it n4">R.HCMC.DisenoEstructuraEscalonadaFlujoRasanteGIS</span></div>
    <div class="cl"><b class="cb ck"></b><em class="c1"></em>70.1 - 70.6</div>
    <div class="cl"><b class="cb ck"></b><em class="c2"></em>70.6 - 71.2</div>
    <div class="cl"><b class="cb ck"></b><em class="c3"></em>71.2 - 71.7</div>
    <div class="cl"><b class="cb ck"></b><em class="c4"></em>71.7 - 73.24</div>
    <div class="cl"><b class="cb ck"></b><em class="c5"></em>73.24 - 73.73</div>
  </div>
</section>
<div class="split"><svg viewBox="0 0 4 34"><path d="M2 0v34" stroke="#bcbcbc" stroke-width="2" stroke-dasharray="2 3.330"/></svg></div>
<section class="canvas">
  <div class="msg">
    <svg class="okic" viewBox="0 0 46 34"><path d="M1 5l13 12L45 1 12 33z" fill="url(#gk)" stroke="#0b6b12" stroke-width="1.600"/></svg>
    <div class="msgtext"><p><b>Layer Exported:</b> <span class="m2">Successfully saved vector layer to </span><a>D:</a></p><p><a class="m3">\D_SSD2TB\R.HCMC\file\cad\DisenoEstructuraEscalonadaFlujoRasanteGIS.dxf</a></p></div>
    <div class="mini"><b><svg viewBox="0 0 14 8"><use href="#up"/></svg></b><b><svg viewBox="0 0 16 8"><use href="#dn"/></svg></b></div>
    <svg class="mclose" viewBox="0 0 34 34"><circle cx="17" cy="17" r="17" fill="#2e3436"/><path d="M10.500 10.500l13 13M23.500 10.500l-13 13" stroke="#fff" stroke-width="4.400" stroke-linecap="round"/></svg>
  </div>
  <svg class="map" viewBox="845 455 1111 992">
    <defs>
      <circle id="pt" r="7.500" fill="#91522d" stroke="#232323" stroke-width="1.200"/>
      <g id="prow"><use href="#pt" x="954"/><use href="#pt" x="1383"/><use href="#pt" x="1388"/><use href="#pt" x="1393"/><use href="#pt" x="1398"/><use href="#pt" x="1403"/><use href="#pt" x="1408"/><use href="#pt" x="1413"/><use href="#pt" x="1418"/><use href="#pt" x="1423"/><use href="#pt" x="1432"/><use href="#pt" x="1429"/><use href="#pt" x="1856"/></g>
    </defs>
    <use href="#prow" y="710"/><use href="#prow" y="851"/><use href="#prow" y="1021"/><use href="#prow" y="1162"/>
  </svg>
</section>
<div class="split s2"><svg viewBox="0 0 4 34"><path d="M2 0v34" stroke="#bcbcbc" stroke-width="2" stroke-dasharray="2 3.330"/></svg></div>
<section class="dock proc">
  <div class="dockhead"><span>Processing Toolbox</span><svg class="dockbtns" viewBox="0 0 52 24"><g fill="none" stroke="#6a6a6a" stroke-width="1.800"><rect x="1" y="1" width="21" height="21" rx="4"/><rect x="29" y="1" width="21" height="21" rx="4"/><rect x="6" y="10" width="8" height="8" rx="1"/><path d="M10 9V5h8v9h-3"/></g><path d="M34.500 6.500l10 10M44.500 6.500l-10 10" stroke="#555" stroke-width="4"/></svg></div>
  <div class="docktools ptools">
    <svg class="w36" viewBox="0 0 36 36"><g color="#c4161c"><use href="#gear" width="21" height="23"/></g><g color="#7c7c7c"><use href="#gear" x="18" y="10" width="15" height="17"/></g><g color="#86a9dc"><use href="#gear" x="9" y="22" width="13" height="13"/></g><circle cx="10.500" cy="11.500" r="2" fill="#fff"/><circle cx="25.500" cy="18.500" r="1.500" fill="#fff"/><path d="M25 31h11l-5.500 6z" fill="#444"/></svg>
    <svg class="w36" viewBox="0 0 36 36"><use href="#py" x="2" y="2" width="31" height="31"/><path d="M25 31h11l-5.500 6z" fill="#444"/></svg>
    <svg class="w36" viewBox="0 0 24 24"><use href="#clock" x="1" y="1" width="22" height="22"/></svg>
    <svg class="w36" viewBox="0 0 36 36"><path d="M7 2h14l7 7v25H7z" fill="#fff" stroke="#777" stroke-width="1.500"/><path d="M21 2v7h7M10 12h7M10 17h15M10 21h13M10 25h15M10 29h10" fill="none" stroke="#777" stroke-width="1.400"/></svg>
    <b class="vs"></b>
    <svg class="w36" viewBox="0 0 36 36"><rect x="3" y="4" width="18" height="19" fill="#fde93b" stroke="#c4a000" stroke-width="1.300"/><path d="M25 8l5 3-9 19-6 5 1-8z" fill="#e5d25a" stroke="#666" stroke-width="1"/><path d="M16 28l4 2-5 4z" fill="#555"/></svg>
    <b class="vs"></b>
    <svg class="w36" viewBox="0 0 36 36"><path d="M17 16l4-3 12 16q1 5-5 4z" fill="#e9d87a" stroke="#444" stroke-width="1.200"/><path d="M9 2q8-2 10 4l1 5 3 4-6 5-4-4q-6 1-9-6l5 2 4-4z" fill="#f2f2f2" stroke="#444" stroke-width="1.200"/><circle cx="29.500" cy="30" r="1.600" fill="#444"/></svg>
  </div>
  <div class="search"><svg viewBox="0 0 28 30"><circle cx="12" cy="12" r="9" fill="none" stroke="#8a8a8a" stroke-width="2"/><path d="M18 19l7 8" stroke="#8a8a8a" stroke-width="3"/></svg>Search...</div>
  <div class="tree ptree">
    <div class="plist">
      <div class="pr"><s></s><svg><use href="#clock"/></svg>Recently used</div>
      <div class="pr"><s></s><svg><use href="#q"/></svg>3D Tiles</div>
      <div class="pr"><s></s><svg><use href="#q"/></svg>Cartography</div>
      <div class="pr"><s></s><svg><use href="#q"/></svg>Check geometry</div>
      <div class="pr"><s></s><svg><use href="#q"/></svg>Database</div>
      <div class="pr"><s></s><svg><use href="#q"/></svg>File tools</div>
      <div class="pr"><s></s><svg><use href="#q"/></svg>Fix geometry</div>
      <div class="pr"><s></s><svg><use href="#q"/></svg>GPS</div>
      <div class="pr"><s></s><svg><use href="#q"/></svg>Interpolation</div>
      <div class="pr"><s></s><svg><use href="#q"/></svg>Layer tools</div>
      <div class="pr"><s></s><svg><use href="#q"/></svg>Mesh</div>
      <div class="pr"><s></s><svg><use href="#q"/></svg>Metadata tools</div>
      <div class="pr"><s></s><svg><use href="#q"/></svg>Network analysis</div>
      <div class="pr"><s></s><svg><use href="#q"/></svg>Plots</div>
      <div class="pr"><s></s><svg><use href="#q"/></svg>Point cloud conversion</div>
      <div class="pr"><s></s><svg><use href="#q"/></svg>Point cloud data management</div>
      <div class="pr"><s></s><svg><use href="#q"/></svg>Point cloud extraction</div>
      <div class="pr"><s></s><svg><use href="#q"/></svg>Raster analysis</div>
      <div class="pr"><s></s><svg><use href="#q"/></svg>Raster creation</div>
      <div class="pr"><s></s><svg><use href="#q"/></svg>Raster terrain analysis</div>
      <div class="pr"><s></s><svg><use href="#q"/></svg>Raster tools</div>
      <div class="pr"><s></s><svg><use href="#q"/></svg>Vector analysis</div>
      <div class="pr"><s></s><svg><use href="#q"/></svg>Vector coverage</div>
      <div class="pr"><s></s><svg><use href="#q"/></svg>Vector creation</div>
    </div>
    <div class="sbar"><b class="sb"><svg><use href="#up"/></svg></b><b class="thumb"></b><b class="sb dnb"><svg><use href="#dn"/></svg></b></div>
  </div>
  <div class="tabs"><span class="tab">Browser</span><span class="tab act">Processing Toolbox</span><span class="rest"></span></div>
</section>
</main>

<footer class="status">
  <span class="field loc"><svg viewBox="0 0 28 30"><circle cx="12" cy="12" r="9" fill="none" stroke="#8a8a8a" stroke-width="2"/><path d="M18 19l7 8" stroke="#8a8a8a" stroke-width="3"/></svg><span>Type to locate (Ctrl+K)</span></span>
  <span class="lcoord">Coordinate</span>
  <span class="field coord">1000014.8, 999986.2</span>
  <svg class="mouse" viewBox="0 0 32 32"><ellipse cx="21" cy="25" rx="9" ry="7" fill="#c9bcbc"/><path d="M2 5Q4 0 10 1l7 8-6 8Q1 15 2 5z" fill="#fff" stroke="#000" stroke-width="2"/><path d="M6 4l3 8M10 2l4 9" stroke="#000" stroke-width="3"/><path d="M9 20q4-9 11-8 7 4 6 12-3 7-10 6-6-2-7-10z" fill="#fff" stroke="#000" stroke-width="2.400"/><circle cx="18" cy="22" r="3" fill="none" stroke="#000" stroke-width="2"/><path d="M22 6l2-1M26 4l2-3M29 6l2-1M1 20l2 1" stroke="#000" stroke-width="2"/></svg>
  <span class="lscale">Scale</span>
  <span class="field scale"><span class="val">1:668</span><span class="cbtn"><svg><use href="#dn"/></svg></span></span>
  <svg class="lock" viewBox="0 0 24 30"><path d="M5 15V8q0-6 7-6t7 6v7" fill="none" stroke="#8b8b8b" stroke-width="3"/><path d="M5 15V8q0-6 7-6t7 6v7" fill="none" stroke="#fff" stroke-width=".7"/><rect x="0" y="13" width="24" height="17" rx="3" fill="#666"/></svg>
  <span class="lmag">Magnifier</span>
  <span class="field magf"><span class="val">100%</span><span class="spin"><svg><use href="#up"/></svg><svg><use href="#dn"/></svg></span></span>
  <span class="lrot">Rotation</span>
  <span class="field rotf"><span class="val">0.0 °</span><span class="spin"><svg><use href="#up"/></svg><svg><use href="#dn"/></svg></span></span>
  <b class="cb ck rcb"></b>
  <span class="lrender">Render</span>
  <svg class="gl"><use href="#globe"/></svg>
  <span class="lepsg">EPSG:3116</span>
  <svg class="bub" viewBox="0 0 32 32"><path d="M16 0C7 0 0 5.500 0 13s6 12.500 14 13c2 0 5 0 7-1q4 5 9.500 6.500-3.500-4-3.500-9 5-4 5-9.500C32 5.500 25 0 16 0z" fill="#606060"/><circle cx="8" cy="14" r="2.300" fill="#fff"/><circle cx="16" cy="14" r="2.300" fill="#fff"/><circle cx="24" cy="14" r="2.300" fill="#fff"/></svg>
</footer>
</body>
</html>
```
FILE: styles.css
```css
* { box-sizing: border-box; }
body {
  margin: 0;
  width: 2560px;
  height: 1504px;
  overflow: hidden;
  background: #efefef;
  color: #000;
  font: 21.33px/26px "DejaVu Sans Condensed", "DejaVu Sans", sans-serif;
  display: flex;
  flex-direction: column;
}
svg { display: block; flex: none; overflow: visible; }
svg text { font-family: "DejaVu Sans Condensed", "DejaVu Sans", sans-serif; }
.defs { position: absolute; }
p { margin: 0; }

.titlebar { height: 45px; background: #f3f3f3; color: #8e8e8e; display: flex; align-items: center; flex: none; }
.logo { width: 31px; height: 30px; margin: 0 0 0 2px; }
.wtitle { margin-left: 8px; margin-top: 2px; white-space: nowrap; font-size: 22.600px; letter-spacing: .55px; }
.winbtns { width: 210px; height: 24px; margin: -3px 34px 0 auto; }

.menubar { height: 37px; flex: none; display: flex; gap: 28.500px; padding: 6px 0 0 21px; color: #949494; border-bottom: 2px solid #d8d8d8; letter-spacing: .06px; }
.menubar u { text-underline-offset: 4px; text-decoration-thickness: 2px; text-decoration-skip-ink: none; }

.toolbar { height: 78px; flex: none; display: flex; align-items: center; padding: 2px 11px 0 10px; border-bottom: 2px solid #b4b4b4; background: linear-gradient(#fafafa, #efefef); }
.toolbar.last { height: 76px; padding-top: 4px; }
.handle { width: 10px; height: 34px; margin: 0 6px 0 16px; }
.handle:first-child { margin-left: 0; margin-right: 5px; }
.handle.h33 { margin-left: 17px; }
.handle.h32 { margin-left: 16px; }
.handle.far { margin-left: auto; }
.handle:last-child { margin-right: 4px; }
.t { width: 66px; height: 62px; flex: none; display: flex; align-items: center; justify-content: center; position: relative; font-style: normal; }
.t > svg:first-child { width: 48px; height: 48px; }
.t.on { width: 64px; margin: 0 1px; background: #dadada; border: 2px solid #aeaeae; border-radius: 5px; }
.t.soft { border-color: #c4c4c4; }
.t.off > svg:first-child { opacity: .28; filter: grayscale(1); }
.dd { width: 16px; height: 8px; margin: 3px 6px 0 2px; color: #555; }
.dis { color: #a6a6a6; }
.sub { position: absolute; right: 3px; bottom: 8px; width: 12px; height: 6px; color: #444; }
.sub.dis { color: #a6a6a6; }
.sep { width: 2px; height: 38px; margin: 0 5px 0 6px; background: #cfcfcf; }
.abc { font-size: 10px; font-weight: bold; fill: #333; }
.abc.red { fill: #e01010; }

.field { height: 43px; border: 2px solid #ababab; border-radius: 5px; background: #fff; display: flex; align-items: center; box-shadow: inset 0 2px 1px #ededed; white-space: nowrap; flex: none; }
.field .val { flex: 1; padding-top: 3px; }
.tol { width: 167px; height: 40px; margin: 0 3px 0 1px; background: #efefef; color: #777; padding-left: 9px; }
.unit { width: 177px; height: 43px; color: #777; padding: 0 13px 0 8px; background: linear-gradient(#fdfdfd, #f1f1f1); border-color: #c4c4c4; box-shadow: none; }
.ddi { width: 16px; height: 9px; }
.first4 { margin-left: 2px; }
.spin { width: 29px; height: 100%; border-left: 2px solid #b0b0b0; display: flex; flex-direction: column; align-items: center; justify-content: center; gap: 7px; color: #555; background: #f6f6f6; border-radius: 0 4px 4px 0; }
.spin.dis { color: #a0a0a0; }
.spin svg { width: 16px; height: 8px; }

.work { display: flex; height: 1056px; flex: none; padding-top: 3px; }
.dock { display: flex; flex-direction: column; }
.layers { width: 831px; }
.dockhead { height: 44px; display: flex; justify-content: space-between; align-items: center; padding: 0 2px 4px 8px; }
.dockhead span { padding-top: 3px; }
.dockbtns { width: 52px; height: 24px; margin-top: 0; }
.docktools { height: 56px; display: flex; align-items: center; padding-bottom: 6px; }
.ltools svg { width: 32px; height: 32px; }
.ltools { padding-left: 16px; gap: 18px; }
.ltools .dd8 { width: 15px; height: 8px; color: #555; margin: 0 -2px 0 -6px; }
.tree { background: #fff; border: 2px solid #b8b8b8; }
.ltree { height: 954px; border-width: 1px; padding-top: 1px; margin-top: -1px; }
.lr { height: 36px; display: flex; align-items: center; padding-left: 47px; position: relative; }
.lr.cur { background: #efefef; height: 37px; margin-bottom: -1px; }
.lr.open { padding-left: 0; }
.tw { width: 16px; height: 9px; color: #444; margin: 0 17px 0 14px; }
.cb { width: 28px; height: 28px; flex: none; border: 2px solid #bdbdbd; background: #fff; box-shadow: inset 0 2px 1px #eee; position: relative; }
.ck::after { content: ""; position: absolute; left: 4px; top: 3px; width: 17px; height: 19px; background: #000; clip-path: polygon(0 48%, 22% 42%, 36% 72%, 82% 0, 100% 0, 40% 100%, 28% 100%); }
.pi { width: 24px; height: 28px; margin: -2px 16px 0 16px; }
.dot { width: 18px; height: 18px; margin: 0 21px 0 19px; }
.nm { font-weight: bold; white-space: nowrap; padding-top: 1px; }
.nm.it { font-style: italic; color: #808080; }
.n1 { text-decoration: underline; text-decoration-thickness: 2px; text-underline-offset: 3px; text-decoration-skip-ink: none; letter-spacing: .27px; }
.n2 { letter-spacing: .33px; }
.n3 { letter-spacing: .36px; }
.n4 { letter-spacing: .38px; }
.crs { width: 33px; height: 50px; position: absolute; right: 9px; top: -7px; }
.cl { height: 42px; display: flex; align-items: center; padding-left: 87px; letter-spacing: .12px; }
.cl em { width: 16px; height: 16px; border-radius: 50%; margin: 0 23px 0 23px; }
.c1 { background: #440154; } .c2 { background: #3b528b; } .c3 { background: #21918c; } .c4 { background: #5ec962; } .c5 { background: #fde725; }

.split { width: 13px; display: flex; align-items: center; justify-content: center; padding-left: 2px; }
.split svg { width: 4px; height: 34px; }
.canvas { width: 1113px; border: 1px solid #b0b0b0; border-top: 0; background: #fff; height: 1053px; display: flex; flex-direction: column; }
.msg { height: 60px; border: 2px solid #8c9a88; margin: 0 -1px; background: #dff0d8; display: flex; flex: none; }
.okic { width: 46px; height: 34px; margin: 11px 0 0 19px; }
.msgtext { width: 860px; margin: 5px 0 0 22px; padding-top: 12px; height: 51px; overflow: hidden; white-space: nowrap; }
.msgtext p { height: 26px; line-height: 26px; }
.msgtext a { color: #2e7d0b; text-decoration: underline; text-underline-offset: 3px; text-decoration-thickness: 2px; }
.m2 { letter-spacing: .05px; }
.m3 { letter-spacing: .2px; }
.mini { width: 28px; margin: 8px 0 0 5px; display: flex; flex-direction: column; gap: 1px; }
.mini b { height: 22px; background: #efefef; border: 2px solid; border-color: #fff #777 #777 #fff; display: flex; align-items: center; justify-content: center; }
.mini svg { width: 5px; height: 3px; color: #333; }
.mclose { width: 34px; height: 34px; margin: 9px 0 0 51px; }
.map { width: 1111px; height: 992px; }

.proc { width: 590px; }
.proc .dockhead { padding-left: 9px; letter-spacing: .15px; }
.ptools { padding-left: 16px; gap: 14px; }
.w36 { width: 36px; height: 36px; }
.vs { width: 2px; height: 28px; background: #cdcdcd; }
.vs + svg { margin-left: -1px; }
.search { height: 45px; flex: none; border: 2px solid #ababab; border-radius: 5px; background: #fff; box-shadow: inset 0 2px 1px #ededed; color: #7c7c7c; display: flex; align-items: center; padding: 6px 0 0 14px; }
.search svg { width: 28px; height: 30px; margin: -9px 14px 0 0; }
.ptree { height: 859px; display: flex; overflow: hidden; border-width: 1px; flex: none; }
.plist { flex: 1; padding-top: 2px; }
.pr { height: 36px; display: flex; align-items: center; padding-left: 17px; }
.pr s { border-left: 9px solid #555; border-top: 8px solid transparent; border-bottom: 8px solid transparent; margin-right: 22px; }
.pr svg { width: 28px; height: 28px; margin: 0 14px 0 0; }
.sbar { width: 29px; border-left: 1px solid #c4c4c4; background: #e3e3e3; display: flex; flex-direction: column; }
.sb { height: 28px; background: #fafafa; border-bottom: 2px solid #c4c4c4; display: flex; align-items: center; justify-content: center; color: #555; }
.sb svg { width: 15px; height: 9px; }
.thumb { height: 541px; background: linear-gradient(90deg, #fbfbfb, #f1f1f1); border-bottom: 2px solid #bdbdbd; }
.dnb { margin-top: auto; border-bottom: 0; border-top: 2px solid #bdbdbd; height: 32px; }
.tabs { display: flex; height: 48px; margin-top: 3px; align-items: flex-start; }
.tab { width: 129px; height: 42px; background: #dcdcdc; border: 2px solid #b4b4b4; border-radius: 0 0 5px 5px; padding-top: 8px; line-height: 26px; text-align: center; }
.tab.act { width: 236px; height: 46px; background: #f7f7f7; border-top: 0; padding-top: 12px; }
.rest { flex: 1; height: 2px; background: #b4b4b4; }

.status { flex: 1; display: flex; align-items: center; padding: 3px 0 3px 8px; white-space: nowrap; }
.status > * { flex: none; }
.status > span:not(.field) { padding-top: 4px; }
.loc { width: 399px; color: #777; padding-left: 14px; }
.loc svg { width: 28px; height: 30px; margin-right: 14px; }
.loc span, .coord { padding-top: 4px; }
.loc span { letter-spacing: .12px; }
.lcoord { margin-left: 516px; width: 105px; }
.coord { width: 236px; margin-left: 7px; padding-left: 12px; }
.mouse { width: 32px; height: 32px; margin-left: 9px; }
.lscale { margin-left: 27px; width: 51px; }
.scale { width: 160px; margin-left: 7px; padding-left: 7px; }
.cbtn { width: 40px; height: 100%; border-left: 2px solid #b0b0b0; background: linear-gradient(#fdfdfd, #efefef); display: flex; align-items: center; justify-content: center; color: #555; border-radius: 0 4px 4px 0; }
.cbtn svg { width: 16px; height: 9px; }
.lock { width: 24px; height: 30px; margin-left: 25px; }
.lmag { margin-left: 18px; width: 89px; }
.magf { width: 167px; height: 40px; margin-left: 7px; padding-left: 9px; }
.lrot { margin-left: 20px; width: 80px; }
.rotf { width: 167px; height: 40px; margin-left: 19px; padding-left: 8px; }
.rcb { margin-left: 13px; }
.lrender { margin-left: 11px; width: 69px; }
.gl { width: 32px; height: 32px; margin-left: 29px; }
.lepsg { margin-left: 5px; width: 107px; }
.bub { width: 32px; height: 30px; margin-left: 46px; }
```
